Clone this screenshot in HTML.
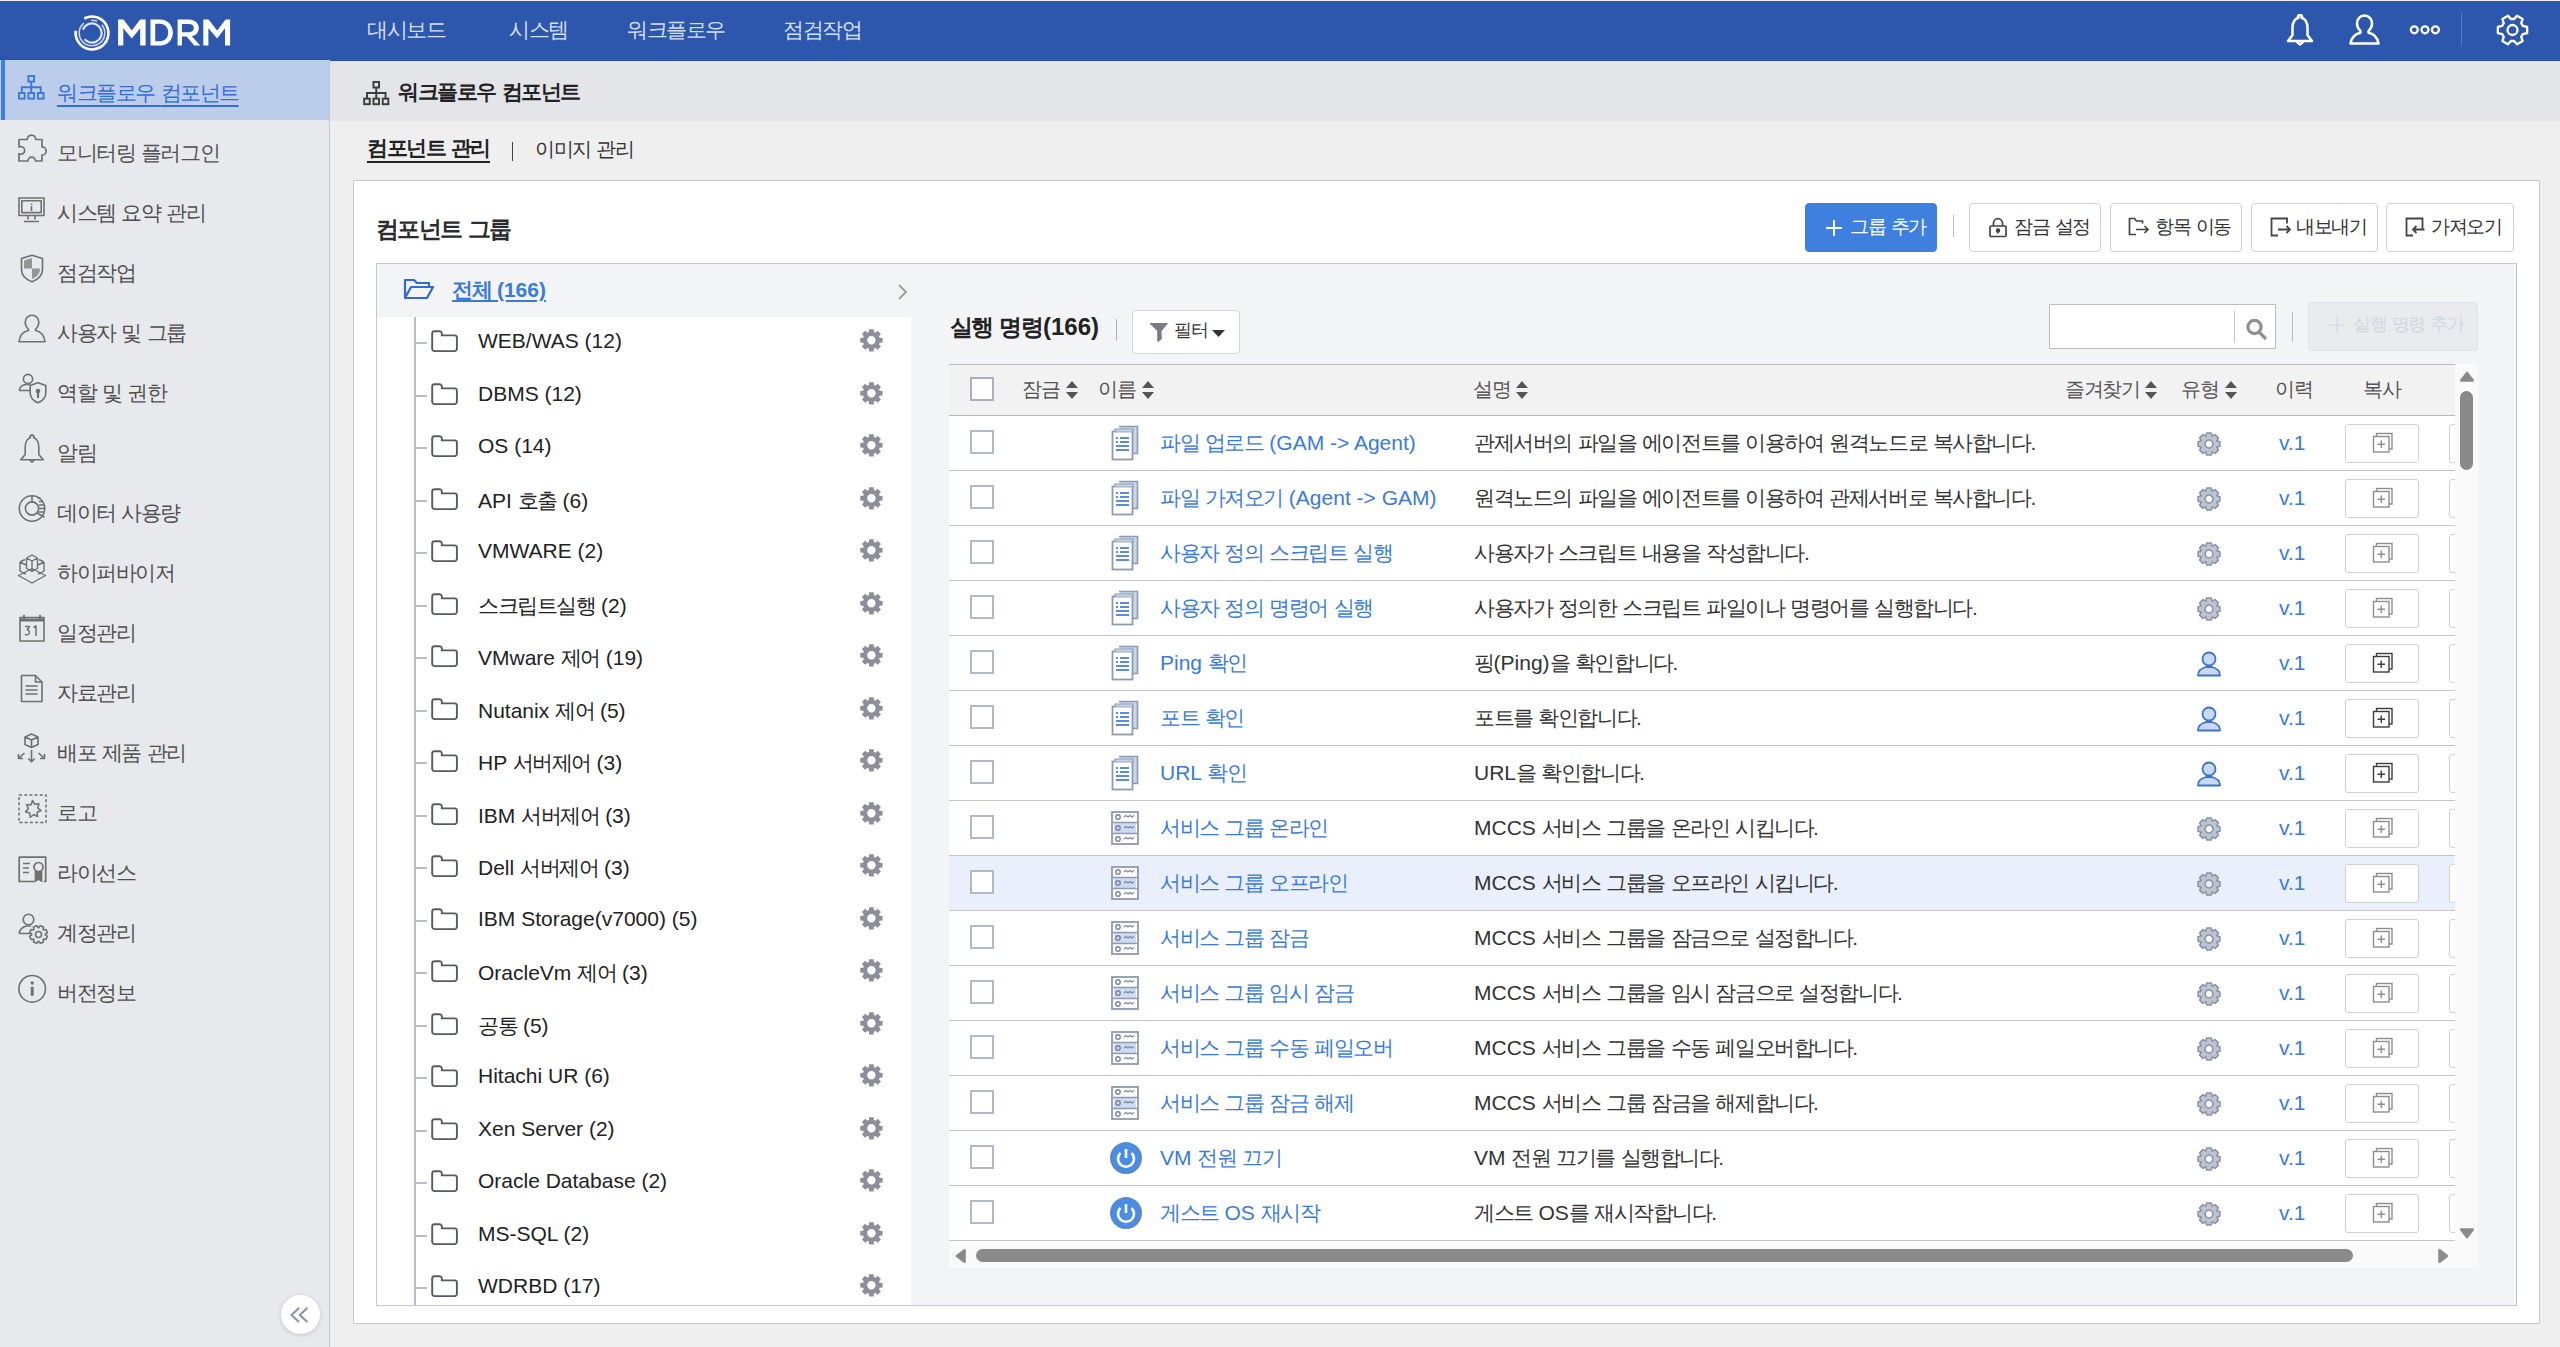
<!DOCTYPE html><html lang="ko"><head><meta charset="utf-8"><style>
*{box-sizing:border-box;margin:0;padding:0}
html,body{width:2560px;height:1347px;overflow:hidden}
body{font-family:"Liberation Sans",sans-serif;background:#efefef;position:relative;color:#333}
.a{position:absolute;white-space:nowrap}
svg{position:absolute;overflow:visible}
#hdr{left:0;top:0;width:2560px;height:61px;background:#2d57ad;border-top:1px solid #e9eef8;border-bottom:1px solid #2750a6}
.nav{top:16px;font-size:21px;color:#d5def3}
#side{left:0;top:59px;width:330px;height:1288px;background:#e8e9ed;border-right:1px solid #c3c6cc;border-top:1px solid #484c55}
.sit{position:absolute;left:0;width:329px;height:60px}
.sit .tx{position:absolute;left:57px;top:19px;font-size:21px;color:#505050;white-space:nowrap}
.act{background:#bccdeb}
.act .bar{position:absolute;left:1px;top:0;width:4px;height:60px;background:#3f80e0}
#titlebar{left:330px;top:61px;width:2230px;height:60px;background:#e4e5e8}
#card{left:353px;top:180px;width:2187px;height:1144px;background:#fff;border:1px solid #c9cacd}
#panel{left:376px;top:263px;width:2141px;height:1043px;background:#f3f4f6;border:1px solid #c6c8cc}
.btn{position:absolute;top:203px;height:49px;border:1px solid #cfd1d5;border-radius:4px;background:#fff}
.btn .tx{position:absolute;top:10px;font-size:18.5px;color:#333;white-space:nowrap}
.tree{left:377px;top:317px;width:534px;height:989px;background:#fff;border-bottom:1px solid #c6c8cc}
.ti{position:absolute;left:0;width:534px;height:52px}
.ti .tx{position:absolute;left:101px;top:14px;font-size:21px;color:#222;white-space:nowrap}
.th{position:absolute;top:376px;font-size:20px;color:#555;white-space:nowrap}
.row{position:absolute;left:949px;width:1506px;height:55px;border-bottom:1px solid #c4c4c4;background:#fff}
.cb{position:absolute;left:21px;top:14px;width:24px;height:24px;border:2px solid #b1b8c6;background:#fff}
.nm{position:absolute;left:211px;top:13px;font-size:21px;color:#3a7bd9;white-space:nowrap}
.ds{position:absolute;left:525px;top:13px;font-size:21px;color:#333;white-space:nowrap}
.vr{position:absolute;left:1330px;top:15px;font-size:21px;color:#3a7bd9;white-space:nowrap}
.cp{position:absolute;left:1396px;top:8px;width:74px;height:39px;border:1px solid #d0d0d0;border-radius:3px;background:#fff}
.cp2{position:absolute;left:1500px;top:8px;width:20px;height:39px;border:1px solid #d0d0d0;border-radius:3px;background:#fff}
.k{letter-spacing:-0.07em}</style></head><body><div id="hdr" class="a"></div><svg width="40" height="40" viewBox="0 0 40 40" style="left:71.7px;top:12.5px" fill="none" stroke="#fff"><circle cx="20" cy="20" r="16.4" stroke-width="2.6" stroke-dasharray="87 16" transform="rotate(242 20 20)"/><circle cx="20" cy="20" r="12.8" stroke-width="1.6" opacity=".75" stroke-dasharray="60 8 6 6" transform="rotate(-40 20 20)"/><circle cx="20" cy="20" r="9.6" stroke-width="2.2" opacity=".85" stroke-dasharray="50 10" transform="rotate(200 20 20)"/></svg><svg width="260" height="61" viewBox="0 0 260 61" style="left:0;top:0"><path fill="#fff" fill-rule="evenodd" d="M118.1 45.6V19.4H123.5L131.8 30.4L140.1 19.4H145.6V45.6H140.2V28.3L131.8 38.5L123.3 28.3V45.6Z M150.5 19.4H160.5C167.5 19.4 172.9 25 172.9 32.5C172.9 40 167.5 45.6 160.5 45.6H150.5Z M155.2 23.8V41.2H160.3C164.8 41.2 168.2 37.5 168.2 32.5C168.2 27.5 164.8 23.8 160.3 23.8Z M177.6 45.6V19.4H189C194.8 19.4 198.8 23 198.8 28C198.8 32.3 196 35.4 191.8 36.2L200.2 45.6H194.2L186.6 36.6H181.9V45.6Z M181.9 23.9V32.2H188.8C191.8 32.2 193.8 30.6 193.8 28C193.8 25.4 191.8 23.9 188.8 23.9Z M203.3 45.6V19.4H208.6L217.1 30.4L225.6 19.4H230.1V45.6H225V28.3L217.1 38.5L208.4 28.3V45.6Z"/></svg><div class="a nav" style="left:367px"><span class="k">대시보드</span></div><div class="a nav" style="left:509px"><span class="k">시스템</span></div><div class="a nav" style="left:627px"><span class="k">워크플로우</span></div><div class="a nav" style="left:783px"><span class="k">점검작업</span></div><svg width="30" height="34" viewBox="0 0 30 34" style="left:2285px;top:13px" fill="none" stroke="#fff" stroke-width="2.5" stroke-linejoin="round"><path d="M15 2.5a1.2 1.2 0 0 1 1.5 2.2C21 6 22.5 10 22.5 15v7l4.5 6H3l4.5-6v-7c0-5 1.5-9 6-10.300A1.2 1.200 0 0 1 15 2.500z"/><path d="M11.5 28.5l3.500 3 3.500-3"/></svg><svg width="32" height="32" viewBox="0 0 32 32" style="left:2349px;top:14px" fill="none" stroke="#fff" stroke-width="2.5" stroke-linejoin="round"><path d="M15.500 1.500c-4.500 0-7.500 3.500-7.500 8 0 3 1.200 5.500 3.500 7.500v1.800C6 20 2.500 23 1.500 29.500h28C28.500 23 25 20 19.500 18.800V17c2.300-2 3.500-4.500 3.500-7.500 0-4.500-3-8-7.500-8z"/></svg><svg width="32" height="12" viewBox="0 0 32 12" style="left:2409px;top:24px" fill="none" stroke="#fff" stroke-width="2.2"><circle cx="5.300" cy="5.800" r="3.500"/><circle cx="16" cy="5.800" r="3.500"/><circle cx="26.400" cy="5.800" r="3.500"/></svg><div class="a" style="left:2461px;top:13px;width:1px;height:33px;background:#4f7bd3"></div><svg width="40" height="40" viewBox="0 0 40 40" style="left:2492px;top:10px" fill="none" stroke="#fff" stroke-width="2.3" stroke-linejoin="round"><path d="M30.67 15.80L35.15 16.80 L35.15 23.20 L30.67 24.20A11.00 11.00 0 0 1 29.22 26.70L30.60 31.09 L25.06 34.29 L21.95 30.90A11.00 11.00 0 0 1 19.05 30.90L15.94 34.29 L10.40 31.09 L11.78 26.70A11.00 11.00 0 0 1 10.33 24.20L5.85 23.20 L5.85 16.80 L10.33 15.80A11.00 11.00 0 0 1 11.78 13.30L10.40 8.91 L15.94 5.71 L19.05 9.10A11.00 11.00 0 0 1 21.95 9.10L25.06 5.71 L30.60 8.91 L29.22 13.30A11.00 11.00 0 0 1 30.67 15.80 Z"/><circle cx="20.5" cy="20" r="5"/></svg><div id="side" class="a"><div class="sit act" style="top:0px"><div class="bar"></div><svg width="26.5" height="26.5" viewBox="0 0 28 28" style="left:17.8px;top:14.8px" fill="none" stroke="#3b78d8" stroke-width="2"><rect x="11" y="1" width="6" height="6"/><rect x="1" y="19" width="6" height="6"/><rect x="11" y="19" width="6" height="6"/><rect x="21" y="19" width="6" height="6"/><path d="M14 7v12M4 19v-6h20v6"/></svg><div class="tx" style="color:#2f6fd6;text-decoration:underline;text-decoration-thickness:1.5px;text-underline-offset:5px"><span class="k">워크플로우</span> <span class="k">컴포넌트</span></div></div><div class="sit" style="top:60px"><svg width="30" height="30" viewBox="0 0 30 30" style="left:18px;top:13px" fill="none" stroke="#707070" stroke-width="1.7" stroke-linejoin="round"><path d="M1 6.5h8.2a4.3 4.300 0 1 1 8.600 0H24v7.300a4 4 0 1 1 0 8.400V28h-6.500a3.800 3.800 0 1 0-7.600 0H1v-7.300a3.800 3.800 0 1 0 0-6.600z"/></svg><div class="tx"><span class="k">모니터링</span> <span class="k">플러그인</span></div></div><div class="sit" style="top:120px"><svg width="27" height="26" viewBox="0 0 27 26" style="left:18px;top:17px" fill="none" stroke="#707070" stroke-width="1.6" stroke-linejoin="round"><rect x="1" y="1" width="25" height="17.500"/><rect x="3.800" y="3.800" width="19.400" height="11.800"/><path d="M13.500 6.500v1.300M13.500 9v5M10 18.500v4M17 18.500v4M6 24.500h15"/></svg><div class="tx"><span class="k">시스템</span> <span class="k">요약</span> <span class="k">관리</span></div></div><div class="sit" style="top:180px"><svg width="24" height="29" viewBox="0 0 24 29" style="left:20px;top:14px" fill="none" stroke="#707070" stroke-width="1.6" stroke-linejoin="round"><path d="M12 1.200l10.500 3.300v11c0 6-4.500 10-10.500 12.300C6 25.500 1.500 21.500 1.500 15.500v-11z"/><path d="M4 6.500L12 4v10.500H4zM12 14.500h8c0 5-3 8.500-8 10.500z" fill="#959595" stroke="none"/></svg><div class="tx"><span class="k">점검작업</span></div></div><div class="sit" style="top:240px"><svg width="28" height="30" viewBox="0 0 28 30" style="left:18px;top:14px" fill="none" stroke="#707070" stroke-width="1.6" stroke-linejoin="round"><path d="M14 1.200c-4 0-6.800 3-6.800 7 0 2.800 1.100 5 3.200 6.800v1.500C5.500 17.600 1.800 20 1 27.800h26C26.200 20 22.500 17.600 17.600 16.500V15c2.100-1.800 3.200-4 3.200-6.800 0-4-2.800-7-6.800-7z"/></svg><div class="tx"><span class="k">사용자</span> <span class="k">및</span> <span class="k">그룹</span></div></div><div class="sit" style="top:300px"><svg width="29" height="32" viewBox="0 0 29 32" style="left:18px;top:13px" fill="none" stroke="#707070" stroke-width="1.6" stroke-linejoin="round"><circle cx="10" cy="6" r="4.600"/><path d="M1.200 17.500c.500-3.500 3.500-5.500 6.500-6h4.500M1.200 17.500h11"/><path d="M20 9.800l7.800 2.700v7.300c0 4.800-3.300 8.300-7.800 10-4.500-1.700-7.800-5.200-7.800-10v-7.300z"/><circle cx="20" cy="18" r="2.300" fill="#707070" stroke="none"/><path d="M20 19v6" stroke-width="2.200"/></svg><div class="tx"><span class="k">역할</span> <span class="k">및</span> <span class="k">권한</span></div></div><div class="sit" style="top:360px"><svg width="26" height="30" viewBox="0 0 26 30" style="left:19px;top:14px" fill="none" stroke="#707070" stroke-width="1.6" stroke-linejoin="round"><path d="M13 1.500a1.200 1.200 0 0 1 1.500 2C18.500 5 19.800 8.500 19.800 13v7.500l4.500 5.200H1.700l4.500-5.200V13c0-4.500 1.300-8 5.300-9.500A1.200 1.200 0 0 1 13 1.500z"/><path d="M10.500 25.800l2.500 2.500 2.500-2.500"/></svg><div class="tx"><span class="k">알림</span></div></div><div class="sit" style="top:420px"><svg width="29" height="30" viewBox="0 0 29 30" style="left:18px;top:14px" fill="none" stroke="#707070" stroke-width="1.6" stroke-linejoin="round"><circle cx="14" cy="14.500" r="12.700"/><circle cx="14" cy="14.500" r="6.600"/><path d="M14 1.800v6.100M19 19l7.500 4.200" /><path d="M19.500 4h3M20.800 7.500h4M20.800 11h5.500M20.800 14.500h5.800M20.500 18h5.500M24 21.500" stroke-width="1.300"/></svg><div class="tx"><span class="k">데이터</span> <span class="k">사용량</span></div></div><div class="sit" style="top:480px"><svg width="30" height="33" viewBox="0 0 30 33" style="left:17px;top:12px" fill="none" stroke="#707070" stroke-width="1.4" stroke-linejoin="round"><path d="M1.500 23.500L15 16.500l13.500 7L15 31z"/><path d="M9.500 6l5.500-3 5.500 3v10.500l-5.500 3-5.500-3zM9.500 6l5.500 3 5.500-3M15 9v10.500"/><path d="M3 10l5-2.500M3 10v9l6 3.200M27 10l-5-2.500M27 10v9l-6 3.200M3 10l6 3M27 10l-6 3"/></svg><div class="tx"><span class="k">하이퍼바이저</span></div></div><div class="sit" style="top:540px"><svg width="27" height="28" viewBox="0 0 27 28" style="left:19px;top:14px" fill="none" stroke="#707070" stroke-width="1.6" stroke-linejoin="round"><rect x="1" y="3.500" width="24" height="23.500"/><path d="M1 6h24" stroke-width="3"/><path d="M5 1v4M21 1v4" stroke-width="2"/><path d="M6 12.500h4.500l-2.300 3.200a2.600 2.600 0 1 1-2.300 4.300M14.500 13.500l2.500-1.500v10" stroke-width="1.500"/></svg><div class="tx"><span class="k">일정관리</span></div></div><div class="sit" style="top:600px"><svg width="25" height="30" viewBox="0 0 25 30" style="left:20px;top:14px" fill="none" stroke="#707070" stroke-width="1.6" stroke-linejoin="round"><path d="M1.500 1.500h14l6.500 6.500v19.500H1.500z"/><path d="M15.500 1.500V8H22M5.500 12h12M5.500 16h12M5.500 20h12"/></svg><div class="tx"><span class="k">자료관리</span></div></div><div class="sit" style="top:660px"><svg width="29" height="32" viewBox="0 0 29 32" style="left:17px;top:13px" fill="none" stroke="#707070" stroke-width="1.6" stroke-linejoin="round"><path d="M14.500 1l6.500 3v7.500l-6.500 3-6.500-3V4zM8 4l6.500 3 6.500-3M14.500 7v7.500"/><path d="M14.500 17v11.500M11.300 25.500l3.200 3.200 3.200-3.200M7.500 20l-6 5.500M1.500 21v4.500H6M21.500 20l6 5.500M27.500 21v4.500H23"/></svg><div class="tx"><span class="k">배포</span> <span class="k">제품</span> <span class="k">관리</span></div></div><div class="sit" style="top:720px"><svg width="29" height="30" viewBox="0 0 29 30" style="left:18px;top:14px" fill="none" stroke="#707070" stroke-width="1.5" stroke-linejoin="round"><rect x="1" y="1" width="27" height="27.500" stroke-dasharray="3 2.200"/><path d="M14.500 6.500l2.200 3.800 4.300-.500-1.300 4.100 3.300 2.600-3.900 1.700.500 4.300-3.900-2-3.300 2.800-.700-4.300-4.200-1.300 2.900-3.200-1.800-3.900 4.300.300z"/></svg><div class="tx"><span class="k">로고</span></div></div><div class="sit" style="top:780px"><svg width="29" height="28" viewBox="0 0 29 28" style="left:18px;top:16px" fill="none" stroke="#707070" stroke-width="1.7" stroke-linejoin="round"><path d="M17 25.500H1.200V1.200h26.500v24.300h-2"/><path d="M5 7.500h7M5 12h6M5 16.500h6"/><circle cx="20.500" cy="11" r="4.500"/><path d="M17.500 15v10l3-2 3 2V15" fill="#707070"/></svg><div class="tx"><span class="k">라이선스</span></div></div><div class="sit" style="top:840px"><svg width="30" height="32" viewBox="0 0 30 32" style="left:18px;top:13px" fill="none" stroke="#707070" stroke-width="1.6" stroke-linejoin="round"><circle cx="10.500" cy="6.500" r="5.300"/><path d="M1.200 20.500c.300-4 3.800-6.500 7-7.500h5M1.200 20.500H14" /><circle cx="20.500" cy="21.500" r="3"/><path d="M20.82 14.71L22.21 12.66 L25.54 14.04 L25.07 16.47A6.80 6.80 0 0 1 25.53 16.93L27.96 16.46 L29.34 19.79 L27.29 21.18A6.80 6.80 0 0 1 27.29 21.82L29.34 23.21 L27.96 26.54 L25.53 26.07A6.80 6.80 0 0 1 25.07 26.53L25.54 28.96 L22.21 30.34 L20.82 28.29A6.80 6.80 0 0 1 20.18 28.29L18.79 30.34 L15.46 28.96 L15.93 26.53A6.80 6.80 0 0 1 15.47 26.07L13.04 26.54 L11.66 23.21 L13.71 21.82A6.80 6.80 0 0 1 13.71 21.18L11.66 19.79 L13.04 16.46 L15.47 16.93A6.80 6.80 0 0 1 15.93 16.47L15.46 14.04 L18.79 12.66 L20.18 14.71A6.80 6.80 0 0 1 20.82 14.71 Z"/></svg><div class="tx"><span class="k">계정관리</span></div></div><div class="sit" style="top:900px"><svg width="29" height="30" viewBox="0 0 29 30" style="left:18px;top:14px" fill="none" stroke="#707070" stroke-width="1.6" stroke-linejoin="round"><circle cx="14.200" cy="14.800" r="13.300"/><circle cx="14.200" cy="9" r="1.700" fill="#707070" stroke="none"/><path d="M14.200 12.800v9" stroke-width="3"/></svg><div class="tx"><span class="k">버전정보</span></div></div><div class="a" style="left:281px;top:1235px;width:39px;height:39px;border-radius:50%;background:#fff;box-shadow:0 1px 4px rgba(60,70,90,.22)"><svg width="20" height="20" viewBox="0 0 20 20" style="left:8px;top:11px" fill="none" stroke="#8d95a3" stroke-width="2.2" stroke-linecap="round" stroke-linejoin="round"><path d="M9.5 2.5L2.5 9l7 6.5M17.8 2.5L10.8 9l7 6.5"/></svg></div></div><div id="titlebar" class="a"></div><svg width="26.5" height="26" viewBox="0 0 28 28" style="left:362.5px;top:80.5px" fill="none" stroke="#3d3d3d" stroke-width="2.1"><rect x="11" y="1" width="6" height="6"/><rect x="1" y="19" width="6" height="6"/><rect x="11" y="19" width="6" height="6"/><rect x="21" y="19" width="6" height="6"/><path d="M14 7v12M4 19v-6h20v6"/></svg><div class="a" style="left:398px;top:78px;font-size:21px;font-weight:bold;color:#222"><span class="k">워크플로우</span> <span class="k">컴포넌트</span></div><div class="a" style="left:367px;top:136px;font-size:21px;font-weight:bold;color:#222;border-bottom:2px solid #222;padding-bottom:1px;line-height:24px"><span class="k">컴포넌트</span> <span class="k">관리</span></div><div class="a" style="left:511.5px;top:142px;width:1.5px;height:19px;background:#444"></div><div class="a" style="left:535px;top:136px;font-size:20px;color:#333"><span class="k">이미지</span> <span class="k">관리</span></div><div id="card" class="a"></div><div class="a" style="left:376px;top:214px;font-size:23px;font-weight:bold;color:#2c2c2c"><span class="k">컴포넌트</span> <span class="k">그룹</span></div><div class="btn" style="left:1805px;width:132px;background:#3f7fde;border-color:#3f7fde"><svg width="18" height="18" viewBox="0 0 18 18" style="left:19px;top:15px" stroke="#fff" stroke-width="2"><path d="M9 1v16M1 9h16"/></svg><div class="tx" style="left:44px;color:#fff"><span class="k">그룹</span> <span class="k">추가</span></div></div><div class="a" style="left:1953px;top:215px;width:1px;height:22px;background:#b8bcc6"></div><div class="btn" style="left:1969px;width:132px"><svg width="20" height="22" viewBox="0 0 20 22" style="left:18px;top:13px" fill="none" stroke="#444" stroke-width="1.7"><path d="M5.5 9V6.2a4.500 4.500 0 0 1 9 0V9"/><rect x="2" y="9" width="16" height="10.500" rx="1"/><circle cx="10" cy="13.500" r="1.400" fill="#444"/><path d="M10 13.500v3"/></svg><div class="tx" style="left:44px"><span class="k">잠금</span> <span class="k">설정</span></div></div><div class="btn" style="left:2110px;width:132px"><svg width="22" height="20" viewBox="0 0 22 20" style="left:17px;top:13px" fill="none" stroke="#444" stroke-width="1.7"><path d="M8 17.500H1.500V1.500h5l2 2.500h6v2.500"/><path d="M8 12.500h12M16.500 9l3.500 3.500-3.500 3.500"/></svg><div class="tx" style="left:44px"><span class="k">항목</span> <span class="k">이동</span></div></div><div class="btn" style="left:2251px;width:127px"><svg width="22" height="20" viewBox="0 0 22 20" style="left:18px;top:13px" fill="none" stroke="#444" stroke-width="1.8"><path d="M8 18.500H1.500V1.500h15.500v5"/><path d="M8 12.500h12M16.500 9l3.500 3.500-3.500 3.500"/></svg><div class="tx" style="left:44px"><span class="k">내보내기</span></div></div><div class="btn" style="left:2386px;width:128px"><svg width="22" height="20" viewBox="0 0 22 20" style="left:18px;top:13px" fill="none" stroke="#444" stroke-width="1.8"><path d="M8 18.500H1.500V1.500h16v10.500"/><path d="M19.500 12.500H8M11.500 9L8 12.500l3.500 3.500"/></svg><div class="tx" style="left:44px"><span class="k">가져오기</span></div></div><div id="panel" class="a"></div><svg width="32" height="24" viewBox="0 0 32 24" style="left:403px;top:277px" fill="none" stroke="#2f6bd6" stroke-width="2.2" stroke-linejoin="round"><path d="M2 21V3h9l3 3h12v4M2 21l6-11h22l-6 11z"/></svg><div class="a" style="left:452px;top:276px;font-size:21px;font-weight:bold;color:#3a7bd9;text-decoration:underline;text-underline-offset:3px"><span class="k">전체</span> (166)</div><svg width="10" height="16" viewBox="0 0 10 16" style="left:897px;top:284px" fill="none" stroke="#999" stroke-width="1.8"><path d="M2 1l7 7-7 7"/></svg><div class="a tree"><div class="a" style="left:37px;top:0;width:2px;height:988px;background:#b9bdc5"></div><div class="ti" style="top:-2.0px"><div class="a" style="left:38px;top:27px;width:12px;height:2px;background:#b9bdc5"></div><svg width="28" height="24" viewBox="0 0 28 24" style="left:54px;top:15px" fill="none" stroke="#565b5f" stroke-width="1.9"><path d="M3.5 1.2H8.5a2.3 2.3 0 0 1 2.3 2.3V5.4H23.6a2.3 2.3 0 0 1 2.3 2.3V18.8a2.3 2.3 0 0 1-2.3 2.3H3.5a2.3 2.3 0 0 1-2.3-2.3V3.5a2.3 2.3 0 0 1 2.3-2.3Z"/></svg><div class="tx">WEB/WAS (12)</div><svg width="24" height="24" viewBox="0 0 24 24" style="left:482px;top:13px"><path fill="#8e8e9a" fill-rule="evenodd" d="M9.90 4.07L10.10 1.13 L14.70 1.13 L14.90 4.07A8.60 8.60 0 0 1 16.45 4.71L18.67 2.78 L21.92 6.03 L19.99 8.25A8.60 8.60 0 0 1 20.63 9.80L23.57 10.00 L23.57 14.60 L20.63 14.80A8.60 8.60 0 0 1 19.99 16.35L21.92 18.57 L18.67 21.82 L16.45 19.89A8.60 8.60 0 0 1 14.90 20.53L14.70 23.47 L10.10 23.47 L9.90 20.53A8.60 8.60 0 0 1 8.35 19.89L6.13 21.82 L2.88 18.57 L4.81 16.35A8.60 8.60 0 0 1 4.17 14.80L1.23 14.60 L1.23 10.00 L4.17 9.80A8.60 8.60 0 0 1 4.81 8.25L2.88 6.03 L6.13 2.78 L8.35 4.71A8.60 8.60 0 0 1 9.90 4.07 ZM16.60 12.30 A4.20 4.20 0 1 0 8.20 12.30 A4.20 4.20 0 1 0 16.60 12.30 Z"/></svg></div><div class="ti" style="top:50.5px"><div class="a" style="left:38px;top:27px;width:12px;height:2px;background:#b9bdc5"></div><svg width="28" height="24" viewBox="0 0 28 24" style="left:54px;top:15px" fill="none" stroke="#565b5f" stroke-width="1.9"><path d="M3.5 1.2H8.5a2.3 2.3 0 0 1 2.3 2.3V5.4H23.6a2.3 2.3 0 0 1 2.3 2.3V18.8a2.3 2.3 0 0 1-2.3 2.3H3.5a2.3 2.3 0 0 1-2.3-2.3V3.5a2.3 2.3 0 0 1 2.3-2.3Z"/></svg><div class="tx">DBMS (12)</div><svg width="24" height="24" viewBox="0 0 24 24" style="left:482px;top:13px"><path fill="#8e8e9a" fill-rule="evenodd" d="M9.90 4.07L10.10 1.13 L14.70 1.13 L14.90 4.07A8.60 8.60 0 0 1 16.45 4.71L18.67 2.78 L21.92 6.03 L19.99 8.25A8.60 8.60 0 0 1 20.63 9.80L23.57 10.00 L23.57 14.60 L20.63 14.80A8.60 8.60 0 0 1 19.99 16.35L21.92 18.57 L18.67 21.82 L16.45 19.89A8.60 8.60 0 0 1 14.90 20.53L14.70 23.47 L10.10 23.47 L9.90 20.53A8.60 8.60 0 0 1 8.35 19.89L6.13 21.82 L2.88 18.57 L4.81 16.35A8.60 8.60 0 0 1 4.17 14.80L1.23 14.60 L1.23 10.00 L4.17 9.80A8.60 8.60 0 0 1 4.81 8.25L2.88 6.03 L6.13 2.78 L8.35 4.71A8.60 8.60 0 0 1 9.90 4.07 ZM16.60 12.30 A4.20 4.20 0 1 0 8.20 12.30 A4.20 4.20 0 1 0 16.60 12.30 Z"/></svg></div><div class="ti" style="top:103.0px"><div class="a" style="left:38px;top:27px;width:12px;height:2px;background:#b9bdc5"></div><svg width="28" height="24" viewBox="0 0 28 24" style="left:54px;top:15px" fill="none" stroke="#565b5f" stroke-width="1.9"><path d="M3.5 1.2H8.5a2.3 2.3 0 0 1 2.3 2.3V5.4H23.6a2.3 2.3 0 0 1 2.3 2.3V18.8a2.3 2.3 0 0 1-2.3 2.3H3.5a2.3 2.3 0 0 1-2.3-2.3V3.5a2.3 2.3 0 0 1 2.3-2.3Z"/></svg><div class="tx">OS (14)</div><svg width="24" height="24" viewBox="0 0 24 24" style="left:482px;top:13px"><path fill="#8e8e9a" fill-rule="evenodd" d="M9.90 4.07L10.10 1.13 L14.70 1.13 L14.90 4.07A8.60 8.60 0 0 1 16.45 4.71L18.67 2.78 L21.92 6.03 L19.99 8.25A8.60 8.60 0 0 1 20.63 9.80L23.57 10.00 L23.57 14.60 L20.63 14.80A8.60 8.60 0 0 1 19.99 16.35L21.92 18.57 L18.67 21.82 L16.45 19.89A8.60 8.60 0 0 1 14.90 20.53L14.70 23.47 L10.10 23.47 L9.90 20.53A8.60 8.60 0 0 1 8.35 19.89L6.13 21.82 L2.88 18.57 L4.81 16.35A8.60 8.60 0 0 1 4.17 14.80L1.23 14.60 L1.23 10.00 L4.17 9.80A8.60 8.60 0 0 1 4.81 8.25L2.88 6.03 L6.13 2.78 L8.35 4.71A8.60 8.60 0 0 1 9.90 4.07 ZM16.60 12.30 A4.20 4.20 0 1 0 8.20 12.30 A4.20 4.20 0 1 0 16.60 12.30 Z"/></svg></div><div class="ti" style="top:155.5px"><div class="a" style="left:38px;top:27px;width:12px;height:2px;background:#b9bdc5"></div><svg width="28" height="24" viewBox="0 0 28 24" style="left:54px;top:15px" fill="none" stroke="#565b5f" stroke-width="1.9"><path d="M3.5 1.2H8.5a2.3 2.3 0 0 1 2.3 2.3V5.4H23.6a2.3 2.3 0 0 1 2.3 2.3V18.8a2.3 2.3 0 0 1-2.3 2.3H3.5a2.3 2.3 0 0 1-2.3-2.3V3.5a2.3 2.3 0 0 1 2.3-2.3Z"/></svg><div class="tx">API <span class="k">호출</span> (6)</div><svg width="24" height="24" viewBox="0 0 24 24" style="left:482px;top:13px"><path fill="#8e8e9a" fill-rule="evenodd" d="M9.90 4.07L10.10 1.13 L14.70 1.13 L14.90 4.07A8.60 8.60 0 0 1 16.45 4.71L18.67 2.78 L21.92 6.03 L19.99 8.25A8.60 8.60 0 0 1 20.63 9.80L23.57 10.00 L23.57 14.60 L20.63 14.80A8.60 8.60 0 0 1 19.99 16.35L21.92 18.57 L18.67 21.82 L16.45 19.89A8.60 8.60 0 0 1 14.90 20.53L14.70 23.47 L10.10 23.47 L9.90 20.53A8.60 8.60 0 0 1 8.35 19.89L6.13 21.82 L2.88 18.57 L4.81 16.35A8.60 8.60 0 0 1 4.17 14.80L1.23 14.60 L1.23 10.00 L4.17 9.80A8.60 8.60 0 0 1 4.81 8.25L2.88 6.03 L6.13 2.78 L8.35 4.71A8.60 8.60 0 0 1 9.90 4.07 ZM16.60 12.30 A4.20 4.20 0 1 0 8.20 12.30 A4.20 4.20 0 1 0 16.60 12.30 Z"/></svg></div><div class="ti" style="top:208.0px"><div class="a" style="left:38px;top:27px;width:12px;height:2px;background:#b9bdc5"></div><svg width="28" height="24" viewBox="0 0 28 24" style="left:54px;top:15px" fill="none" stroke="#565b5f" stroke-width="1.9"><path d="M3.5 1.2H8.5a2.3 2.3 0 0 1 2.3 2.3V5.4H23.6a2.3 2.3 0 0 1 2.3 2.3V18.8a2.3 2.3 0 0 1-2.3 2.3H3.5a2.3 2.3 0 0 1-2.3-2.3V3.5a2.3 2.3 0 0 1 2.3-2.3Z"/></svg><div class="tx">VMWARE (2)</div><svg width="24" height="24" viewBox="0 0 24 24" style="left:482px;top:13px"><path fill="#8e8e9a" fill-rule="evenodd" d="M9.90 4.07L10.10 1.13 L14.70 1.13 L14.90 4.07A8.60 8.60 0 0 1 16.45 4.71L18.67 2.78 L21.92 6.03 L19.99 8.25A8.60 8.60 0 0 1 20.63 9.80L23.57 10.00 L23.57 14.60 L20.63 14.80A8.60 8.60 0 0 1 19.99 16.35L21.92 18.57 L18.67 21.82 L16.45 19.89A8.60 8.60 0 0 1 14.90 20.53L14.70 23.47 L10.10 23.47 L9.90 20.53A8.60 8.60 0 0 1 8.35 19.89L6.13 21.82 L2.88 18.57 L4.81 16.35A8.60 8.60 0 0 1 4.17 14.80L1.23 14.60 L1.23 10.00 L4.17 9.80A8.60 8.60 0 0 1 4.81 8.25L2.88 6.03 L6.13 2.78 L8.35 4.71A8.60 8.60 0 0 1 9.90 4.07 ZM16.60 12.30 A4.20 4.20 0 1 0 8.20 12.30 A4.20 4.20 0 1 0 16.60 12.30 Z"/></svg></div><div class="ti" style="top:260.5px"><div class="a" style="left:38px;top:27px;width:12px;height:2px;background:#b9bdc5"></div><svg width="28" height="24" viewBox="0 0 28 24" style="left:54px;top:15px" fill="none" stroke="#565b5f" stroke-width="1.9"><path d="M3.5 1.2H8.5a2.3 2.3 0 0 1 2.3 2.3V5.4H23.6a2.3 2.3 0 0 1 2.3 2.3V18.8a2.3 2.3 0 0 1-2.3 2.3H3.5a2.3 2.3 0 0 1-2.3-2.3V3.5a2.3 2.3 0 0 1 2.3-2.3Z"/></svg><div class="tx"><span class="k">스크립트실행</span> (2)</div><svg width="24" height="24" viewBox="0 0 24 24" style="left:482px;top:13px"><path fill="#8e8e9a" fill-rule="evenodd" d="M9.90 4.07L10.10 1.13 L14.70 1.13 L14.90 4.07A8.60 8.60 0 0 1 16.45 4.71L18.67 2.78 L21.92 6.03 L19.99 8.25A8.60 8.60 0 0 1 20.63 9.80L23.57 10.00 L23.57 14.60 L20.63 14.80A8.60 8.60 0 0 1 19.99 16.35L21.92 18.57 L18.67 21.82 L16.45 19.89A8.60 8.60 0 0 1 14.90 20.53L14.70 23.47 L10.10 23.47 L9.90 20.53A8.60 8.60 0 0 1 8.35 19.89L6.13 21.82 L2.88 18.57 L4.81 16.35A8.60 8.60 0 0 1 4.17 14.80L1.23 14.60 L1.23 10.00 L4.17 9.80A8.60 8.60 0 0 1 4.81 8.25L2.88 6.03 L6.13 2.78 L8.35 4.71A8.60 8.60 0 0 1 9.90 4.07 ZM16.60 12.30 A4.20 4.20 0 1 0 8.20 12.30 A4.20 4.20 0 1 0 16.60 12.30 Z"/></svg></div><div class="ti" style="top:313.0px"><div class="a" style="left:38px;top:27px;width:12px;height:2px;background:#b9bdc5"></div><svg width="28" height="24" viewBox="0 0 28 24" style="left:54px;top:15px" fill="none" stroke="#565b5f" stroke-width="1.9"><path d="M3.5 1.2H8.5a2.3 2.3 0 0 1 2.3 2.3V5.4H23.6a2.3 2.3 0 0 1 2.3 2.3V18.8a2.3 2.3 0 0 1-2.3 2.3H3.5a2.3 2.3 0 0 1-2.3-2.3V3.5a2.3 2.3 0 0 1 2.3-2.3Z"/></svg><div class="tx">VMware <span class="k">제어</span> (19)</div><svg width="24" height="24" viewBox="0 0 24 24" style="left:482px;top:13px"><path fill="#8e8e9a" fill-rule="evenodd" d="M9.90 4.07L10.10 1.13 L14.70 1.13 L14.90 4.07A8.60 8.60 0 0 1 16.45 4.71L18.67 2.78 L21.92 6.03 L19.99 8.25A8.60 8.60 0 0 1 20.63 9.80L23.57 10.00 L23.57 14.60 L20.63 14.80A8.60 8.60 0 0 1 19.99 16.35L21.92 18.57 L18.67 21.82 L16.45 19.89A8.60 8.60 0 0 1 14.90 20.53L14.70 23.47 L10.10 23.47 L9.90 20.53A8.60 8.60 0 0 1 8.35 19.89L6.13 21.82 L2.88 18.57 L4.81 16.35A8.60 8.60 0 0 1 4.17 14.80L1.23 14.60 L1.23 10.00 L4.17 9.80A8.60 8.60 0 0 1 4.81 8.25L2.88 6.03 L6.13 2.78 L8.35 4.71A8.60 8.60 0 0 1 9.90 4.07 ZM16.60 12.30 A4.20 4.20 0 1 0 8.20 12.30 A4.20 4.20 0 1 0 16.60 12.30 Z"/></svg></div><div class="ti" style="top:365.5px"><div class="a" style="left:38px;top:27px;width:12px;height:2px;background:#b9bdc5"></div><svg width="28" height="24" viewBox="0 0 28 24" style="left:54px;top:15px" fill="none" stroke="#565b5f" stroke-width="1.9"><path d="M3.5 1.2H8.5a2.3 2.3 0 0 1 2.3 2.3V5.4H23.6a2.3 2.3 0 0 1 2.3 2.3V18.8a2.3 2.3 0 0 1-2.3 2.3H3.5a2.3 2.3 0 0 1-2.3-2.3V3.5a2.3 2.3 0 0 1 2.3-2.3Z"/></svg><div class="tx">Nutanix <span class="k">제어</span> (5)</div><svg width="24" height="24" viewBox="0 0 24 24" style="left:482px;top:13px"><path fill="#8e8e9a" fill-rule="evenodd" d="M9.90 4.07L10.10 1.13 L14.70 1.13 L14.90 4.07A8.60 8.60 0 0 1 16.45 4.71L18.67 2.78 L21.92 6.03 L19.99 8.25A8.60 8.60 0 0 1 20.63 9.80L23.57 10.00 L23.57 14.60 L20.63 14.80A8.60 8.60 0 0 1 19.99 16.35L21.92 18.57 L18.67 21.82 L16.45 19.89A8.60 8.60 0 0 1 14.90 20.53L14.70 23.47 L10.10 23.47 L9.90 20.53A8.60 8.60 0 0 1 8.35 19.89L6.13 21.82 L2.88 18.57 L4.81 16.35A8.60 8.60 0 0 1 4.17 14.80L1.23 14.60 L1.23 10.00 L4.17 9.80A8.60 8.60 0 0 1 4.81 8.25L2.88 6.03 L6.13 2.78 L8.35 4.71A8.60 8.60 0 0 1 9.90 4.07 ZM16.60 12.30 A4.20 4.20 0 1 0 8.20 12.30 A4.20 4.20 0 1 0 16.60 12.30 Z"/></svg></div><div class="ti" style="top:418.0px"><div class="a" style="left:38px;top:27px;width:12px;height:2px;background:#b9bdc5"></div><svg width="28" height="24" viewBox="0 0 28 24" style="left:54px;top:15px" fill="none" stroke="#565b5f" stroke-width="1.9"><path d="M3.5 1.2H8.5a2.3 2.3 0 0 1 2.3 2.3V5.4H23.6a2.3 2.3 0 0 1 2.3 2.3V18.8a2.3 2.3 0 0 1-2.3 2.3H3.5a2.3 2.3 0 0 1-2.3-2.3V3.5a2.3 2.3 0 0 1 2.3-2.3Z"/></svg><div class="tx">HP <span class="k">서버제어</span> (3)</div><svg width="24" height="24" viewBox="0 0 24 24" style="left:482px;top:13px"><path fill="#8e8e9a" fill-rule="evenodd" d="M9.90 4.07L10.10 1.13 L14.70 1.13 L14.90 4.07A8.60 8.60 0 0 1 16.45 4.71L18.67 2.78 L21.92 6.03 L19.99 8.25A8.60 8.60 0 0 1 20.63 9.80L23.57 10.00 L23.57 14.60 L20.63 14.80A8.60 8.60 0 0 1 19.99 16.35L21.92 18.57 L18.67 21.82 L16.45 19.89A8.60 8.60 0 0 1 14.90 20.53L14.70 23.47 L10.10 23.47 L9.90 20.53A8.60 8.60 0 0 1 8.35 19.89L6.13 21.82 L2.88 18.57 L4.81 16.35A8.60 8.60 0 0 1 4.17 14.80L1.23 14.60 L1.23 10.00 L4.17 9.80A8.60 8.60 0 0 1 4.81 8.25L2.88 6.03 L6.13 2.78 L8.35 4.71A8.60 8.60 0 0 1 9.90 4.07 ZM16.60 12.30 A4.20 4.20 0 1 0 8.20 12.30 A4.20 4.20 0 1 0 16.60 12.30 Z"/></svg></div><div class="ti" style="top:470.5px"><div class="a" style="left:38px;top:27px;width:12px;height:2px;background:#b9bdc5"></div><svg width="28" height="24" viewBox="0 0 28 24" style="left:54px;top:15px" fill="none" stroke="#565b5f" stroke-width="1.9"><path d="M3.5 1.2H8.5a2.3 2.3 0 0 1 2.3 2.3V5.4H23.6a2.3 2.3 0 0 1 2.3 2.3V18.8a2.3 2.3 0 0 1-2.3 2.3H3.5a2.3 2.3 0 0 1-2.3-2.3V3.5a2.3 2.3 0 0 1 2.3-2.3Z"/></svg><div class="tx">IBM <span class="k">서버제어</span> (3)</div><svg width="24" height="24" viewBox="0 0 24 24" style="left:482px;top:13px"><path fill="#8e8e9a" fill-rule="evenodd" d="M9.90 4.07L10.10 1.13 L14.70 1.13 L14.90 4.07A8.60 8.60 0 0 1 16.45 4.71L18.67 2.78 L21.92 6.03 L19.99 8.25A8.60 8.60 0 0 1 20.63 9.80L23.57 10.00 L23.57 14.60 L20.63 14.80A8.60 8.60 0 0 1 19.99 16.35L21.92 18.57 L18.67 21.82 L16.45 19.89A8.60 8.60 0 0 1 14.90 20.53L14.70 23.47 L10.10 23.47 L9.90 20.53A8.60 8.60 0 0 1 8.35 19.89L6.13 21.82 L2.88 18.57 L4.81 16.35A8.60 8.60 0 0 1 4.17 14.80L1.23 14.60 L1.23 10.00 L4.17 9.80A8.60 8.60 0 0 1 4.81 8.25L2.88 6.03 L6.13 2.78 L8.35 4.71A8.60 8.60 0 0 1 9.90 4.07 ZM16.60 12.30 A4.20 4.20 0 1 0 8.20 12.30 A4.20 4.20 0 1 0 16.60 12.30 Z"/></svg></div><div class="ti" style="top:523.0px"><div class="a" style="left:38px;top:27px;width:12px;height:2px;background:#b9bdc5"></div><svg width="28" height="24" viewBox="0 0 28 24" style="left:54px;top:15px" fill="none" stroke="#565b5f" stroke-width="1.9"><path d="M3.5 1.2H8.5a2.3 2.3 0 0 1 2.3 2.3V5.4H23.6a2.3 2.3 0 0 1 2.3 2.3V18.8a2.3 2.3 0 0 1-2.3 2.3H3.5a2.3 2.3 0 0 1-2.3-2.3V3.5a2.3 2.3 0 0 1 2.3-2.3Z"/></svg><div class="tx">Dell <span class="k">서버제어</span> (3)</div><svg width="24" height="24" viewBox="0 0 24 24" style="left:482px;top:13px"><path fill="#8e8e9a" fill-rule="evenodd" d="M9.90 4.07L10.10 1.13 L14.70 1.13 L14.90 4.07A8.60 8.60 0 0 1 16.45 4.71L18.67 2.78 L21.92 6.03 L19.99 8.25A8.60 8.60 0 0 1 20.63 9.80L23.57 10.00 L23.57 14.60 L20.63 14.80A8.60 8.60 0 0 1 19.99 16.35L21.92 18.57 L18.67 21.82 L16.45 19.89A8.60 8.60 0 0 1 14.90 20.53L14.70 23.47 L10.10 23.47 L9.90 20.53A8.60 8.60 0 0 1 8.35 19.89L6.13 21.82 L2.88 18.57 L4.81 16.35A8.60 8.60 0 0 1 4.17 14.80L1.23 14.60 L1.23 10.00 L4.17 9.80A8.60 8.60 0 0 1 4.81 8.25L2.88 6.03 L6.13 2.78 L8.35 4.71A8.60 8.60 0 0 1 9.90 4.07 ZM16.60 12.30 A4.20 4.20 0 1 0 8.20 12.30 A4.20 4.20 0 1 0 16.60 12.30 Z"/></svg></div><div class="ti" style="top:575.5px"><div class="a" style="left:38px;top:27px;width:12px;height:2px;background:#b9bdc5"></div><svg width="28" height="24" viewBox="0 0 28 24" style="left:54px;top:15px" fill="none" stroke="#565b5f" stroke-width="1.9"><path d="M3.5 1.2H8.5a2.3 2.3 0 0 1 2.3 2.3V5.4H23.6a2.3 2.3 0 0 1 2.3 2.3V18.8a2.3 2.3 0 0 1-2.3 2.3H3.5a2.3 2.3 0 0 1-2.3-2.3V3.5a2.3 2.3 0 0 1 2.3-2.3Z"/></svg><div class="tx">IBM Storage(v7000) (5)</div><svg width="24" height="24" viewBox="0 0 24 24" style="left:482px;top:13px"><path fill="#8e8e9a" fill-rule="evenodd" d="M9.90 4.07L10.10 1.13 L14.70 1.13 L14.90 4.07A8.60 8.60 0 0 1 16.45 4.71L18.67 2.78 L21.92 6.03 L19.99 8.25A8.60 8.60 0 0 1 20.63 9.80L23.57 10.00 L23.57 14.60 L20.63 14.80A8.60 8.60 0 0 1 19.99 16.35L21.92 18.57 L18.67 21.82 L16.45 19.89A8.60 8.60 0 0 1 14.90 20.53L14.70 23.47 L10.10 23.47 L9.90 20.53A8.60 8.60 0 0 1 8.35 19.89L6.13 21.82 L2.88 18.57 L4.81 16.35A8.60 8.60 0 0 1 4.17 14.80L1.23 14.60 L1.23 10.00 L4.17 9.80A8.60 8.60 0 0 1 4.81 8.25L2.88 6.03 L6.13 2.78 L8.35 4.71A8.60 8.60 0 0 1 9.90 4.07 ZM16.60 12.30 A4.20 4.20 0 1 0 8.20 12.30 A4.20 4.20 0 1 0 16.60 12.30 Z"/></svg></div><div class="ti" style="top:628.0px"><div class="a" style="left:38px;top:27px;width:12px;height:2px;background:#b9bdc5"></div><svg width="28" height="24" viewBox="0 0 28 24" style="left:54px;top:15px" fill="none" stroke="#565b5f" stroke-width="1.9"><path d="M3.5 1.2H8.5a2.3 2.3 0 0 1 2.3 2.3V5.4H23.6a2.3 2.3 0 0 1 2.3 2.3V18.8a2.3 2.3 0 0 1-2.3 2.3H3.5a2.3 2.3 0 0 1-2.3-2.3V3.5a2.3 2.3 0 0 1 2.3-2.3Z"/></svg><div class="tx">OracleVm <span class="k">제어</span> (3)</div><svg width="24" height="24" viewBox="0 0 24 24" style="left:482px;top:13px"><path fill="#8e8e9a" fill-rule="evenodd" d="M9.90 4.07L10.10 1.13 L14.70 1.13 L14.90 4.07A8.60 8.60 0 0 1 16.45 4.71L18.67 2.78 L21.92 6.03 L19.99 8.25A8.60 8.60 0 0 1 20.63 9.80L23.57 10.00 L23.57 14.60 L20.63 14.80A8.60 8.60 0 0 1 19.99 16.35L21.92 18.57 L18.67 21.82 L16.45 19.89A8.60 8.60 0 0 1 14.90 20.53L14.70 23.47 L10.10 23.47 L9.90 20.53A8.60 8.60 0 0 1 8.35 19.89L6.13 21.82 L2.88 18.57 L4.81 16.35A8.60 8.60 0 0 1 4.17 14.80L1.23 14.60 L1.23 10.00 L4.17 9.80A8.60 8.60 0 0 1 4.81 8.25L2.88 6.03 L6.13 2.78 L8.35 4.71A8.60 8.60 0 0 1 9.90 4.07 ZM16.60 12.30 A4.20 4.20 0 1 0 8.20 12.30 A4.20 4.20 0 1 0 16.60 12.30 Z"/></svg></div><div class="ti" style="top:680.5px"><div class="a" style="left:38px;top:27px;width:12px;height:2px;background:#b9bdc5"></div><svg width="28" height="24" viewBox="0 0 28 24" style="left:54px;top:15px" fill="none" stroke="#565b5f" stroke-width="1.9"><path d="M3.5 1.2H8.5a2.3 2.3 0 0 1 2.3 2.3V5.4H23.6a2.3 2.3 0 0 1 2.3 2.3V18.8a2.3 2.3 0 0 1-2.3 2.3H3.5a2.3 2.3 0 0 1-2.3-2.3V3.5a2.3 2.3 0 0 1 2.3-2.3Z"/></svg><div class="tx"><span class="k">공통</span> (5)</div><svg width="24" height="24" viewBox="0 0 24 24" style="left:482px;top:13px"><path fill="#8e8e9a" fill-rule="evenodd" d="M9.90 4.07L10.10 1.13 L14.70 1.13 L14.90 4.07A8.60 8.60 0 0 1 16.45 4.71L18.67 2.78 L21.92 6.03 L19.99 8.25A8.60 8.60 0 0 1 20.63 9.80L23.57 10.00 L23.57 14.60 L20.63 14.80A8.60 8.60 0 0 1 19.99 16.35L21.92 18.57 L18.67 21.82 L16.45 19.89A8.60 8.60 0 0 1 14.90 20.53L14.70 23.47 L10.10 23.47 L9.90 20.53A8.60 8.60 0 0 1 8.35 19.89L6.13 21.82 L2.88 18.57 L4.81 16.35A8.60 8.60 0 0 1 4.17 14.80L1.23 14.60 L1.23 10.00 L4.17 9.80A8.60 8.60 0 0 1 4.81 8.25L2.88 6.03 L6.13 2.78 L8.35 4.71A8.60 8.60 0 0 1 9.90 4.07 ZM16.60 12.30 A4.20 4.20 0 1 0 8.20 12.30 A4.20 4.20 0 1 0 16.60 12.30 Z"/></svg></div><div class="ti" style="top:733.0px"><div class="a" style="left:38px;top:27px;width:12px;height:2px;background:#b9bdc5"></div><svg width="28" height="24" viewBox="0 0 28 24" style="left:54px;top:15px" fill="none" stroke="#565b5f" stroke-width="1.9"><path d="M3.5 1.2H8.5a2.3 2.3 0 0 1 2.3 2.3V5.4H23.6a2.3 2.3 0 0 1 2.3 2.3V18.8a2.3 2.3 0 0 1-2.3 2.3H3.5a2.3 2.3 0 0 1-2.3-2.3V3.5a2.3 2.3 0 0 1 2.3-2.3Z"/></svg><div class="tx">Hitachi UR (6)</div><svg width="24" height="24" viewBox="0 0 24 24" style="left:482px;top:13px"><path fill="#8e8e9a" fill-rule="evenodd" d="M9.90 4.07L10.10 1.13 L14.70 1.13 L14.90 4.07A8.60 8.60 0 0 1 16.45 4.71L18.67 2.78 L21.92 6.03 L19.99 8.25A8.60 8.60 0 0 1 20.63 9.80L23.57 10.00 L23.57 14.60 L20.63 14.80A8.60 8.60 0 0 1 19.99 16.35L21.92 18.57 L18.67 21.82 L16.45 19.89A8.60 8.60 0 0 1 14.90 20.53L14.70 23.47 L10.10 23.47 L9.90 20.53A8.60 8.60 0 0 1 8.35 19.89L6.13 21.82 L2.88 18.57 L4.81 16.35A8.60 8.60 0 0 1 4.17 14.80L1.23 14.60 L1.23 10.00 L4.17 9.80A8.60 8.60 0 0 1 4.81 8.25L2.88 6.03 L6.13 2.78 L8.35 4.71A8.60 8.60 0 0 1 9.90 4.07 ZM16.60 12.30 A4.20 4.20 0 1 0 8.20 12.30 A4.20 4.20 0 1 0 16.60 12.30 Z"/></svg></div><div class="ti" style="top:785.5px"><div class="a" style="left:38px;top:27px;width:12px;height:2px;background:#b9bdc5"></div><svg width="28" height="24" viewBox="0 0 28 24" style="left:54px;top:15px" fill="none" stroke="#565b5f" stroke-width="1.9"><path d="M3.5 1.2H8.5a2.3 2.3 0 0 1 2.3 2.3V5.4H23.6a2.3 2.3 0 0 1 2.3 2.3V18.8a2.3 2.3 0 0 1-2.3 2.3H3.5a2.3 2.3 0 0 1-2.3-2.3V3.5a2.3 2.3 0 0 1 2.3-2.3Z"/></svg><div class="tx">Xen Server (2)</div><svg width="24" height="24" viewBox="0 0 24 24" style="left:482px;top:13px"><path fill="#8e8e9a" fill-rule="evenodd" d="M9.90 4.07L10.10 1.13 L14.70 1.13 L14.90 4.07A8.60 8.60 0 0 1 16.45 4.71L18.67 2.78 L21.92 6.03 L19.99 8.25A8.60 8.60 0 0 1 20.63 9.80L23.57 10.00 L23.57 14.60 L20.63 14.80A8.60 8.60 0 0 1 19.99 16.35L21.92 18.57 L18.67 21.82 L16.45 19.89A8.60 8.60 0 0 1 14.90 20.53L14.70 23.47 L10.10 23.47 L9.90 20.53A8.60 8.60 0 0 1 8.35 19.89L6.13 21.82 L2.88 18.57 L4.81 16.35A8.60 8.60 0 0 1 4.17 14.80L1.23 14.60 L1.23 10.00 L4.17 9.80A8.60 8.60 0 0 1 4.81 8.25L2.88 6.03 L6.13 2.78 L8.35 4.71A8.60 8.60 0 0 1 9.90 4.07 ZM16.60 12.30 A4.20 4.20 0 1 0 8.20 12.30 A4.20 4.20 0 1 0 16.60 12.30 Z"/></svg></div><div class="ti" style="top:838.0px"><div class="a" style="left:38px;top:27px;width:12px;height:2px;background:#b9bdc5"></div><svg width="28" height="24" viewBox="0 0 28 24" style="left:54px;top:15px" fill="none" stroke="#565b5f" stroke-width="1.9"><path d="M3.5 1.2H8.5a2.3 2.3 0 0 1 2.3 2.3V5.4H23.6a2.3 2.3 0 0 1 2.3 2.3V18.8a2.3 2.3 0 0 1-2.3 2.3H3.5a2.3 2.3 0 0 1-2.3-2.3V3.5a2.3 2.3 0 0 1 2.3-2.3Z"/></svg><div class="tx">Oracle Database (2)</div><svg width="24" height="24" viewBox="0 0 24 24" style="left:482px;top:13px"><path fill="#8e8e9a" fill-rule="evenodd" d="M9.90 4.07L10.10 1.13 L14.70 1.13 L14.90 4.07A8.60 8.60 0 0 1 16.45 4.71L18.67 2.78 L21.92 6.03 L19.99 8.25A8.60 8.60 0 0 1 20.63 9.80L23.57 10.00 L23.57 14.60 L20.63 14.80A8.60 8.60 0 0 1 19.99 16.35L21.92 18.57 L18.67 21.82 L16.45 19.89A8.60 8.60 0 0 1 14.90 20.53L14.70 23.47 L10.10 23.47 L9.90 20.53A8.60 8.60 0 0 1 8.35 19.89L6.13 21.82 L2.88 18.57 L4.81 16.35A8.60 8.60 0 0 1 4.17 14.80L1.23 14.60 L1.23 10.00 L4.17 9.80A8.60 8.60 0 0 1 4.81 8.25L2.88 6.03 L6.13 2.78 L8.35 4.71A8.60 8.60 0 0 1 9.90 4.07 ZM16.60 12.30 A4.20 4.20 0 1 0 8.20 12.30 A4.20 4.20 0 1 0 16.60 12.30 Z"/></svg></div><div class="ti" style="top:890.5px"><div class="a" style="left:38px;top:27px;width:12px;height:2px;background:#b9bdc5"></div><svg width="28" height="24" viewBox="0 0 28 24" style="left:54px;top:15px" fill="none" stroke="#565b5f" stroke-width="1.9"><path d="M3.5 1.2H8.5a2.3 2.3 0 0 1 2.3 2.3V5.4H23.6a2.3 2.3 0 0 1 2.3 2.3V18.8a2.3 2.3 0 0 1-2.3 2.3H3.5a2.3 2.3 0 0 1-2.3-2.3V3.5a2.3 2.3 0 0 1 2.3-2.3Z"/></svg><div class="tx">MS-SQL (2)</div><svg width="24" height="24" viewBox="0 0 24 24" style="left:482px;top:13px"><path fill="#8e8e9a" fill-rule="evenodd" d="M9.90 4.07L10.10 1.13 L14.70 1.13 L14.90 4.07A8.60 8.60 0 0 1 16.45 4.71L18.67 2.78 L21.92 6.03 L19.99 8.25A8.60 8.60 0 0 1 20.63 9.80L23.57 10.00 L23.57 14.60 L20.63 14.80A8.60 8.60 0 0 1 19.99 16.35L21.92 18.57 L18.67 21.82 L16.45 19.89A8.60 8.60 0 0 1 14.90 20.53L14.70 23.47 L10.10 23.47 L9.90 20.53A8.60 8.60 0 0 1 8.35 19.89L6.13 21.82 L2.88 18.57 L4.81 16.35A8.60 8.60 0 0 1 4.17 14.80L1.23 14.60 L1.23 10.00 L4.17 9.80A8.60 8.60 0 0 1 4.81 8.25L2.88 6.03 L6.13 2.78 L8.35 4.71A8.60 8.60 0 0 1 9.90 4.07 ZM16.60 12.30 A4.20 4.20 0 1 0 8.20 12.30 A4.20 4.20 0 1 0 16.60 12.30 Z"/></svg></div><div class="ti" style="top:943.0px"><div class="a" style="left:38px;top:27px;width:12px;height:2px;background:#b9bdc5"></div><svg width="28" height="24" viewBox="0 0 28 24" style="left:54px;top:15px" fill="none" stroke="#565b5f" stroke-width="1.9"><path d="M3.5 1.2H8.5a2.3 2.3 0 0 1 2.3 2.3V5.4H23.6a2.3 2.3 0 0 1 2.3 2.3V18.8a2.3 2.3 0 0 1-2.3 2.3H3.5a2.3 2.3 0 0 1-2.3-2.3V3.5a2.3 2.3 0 0 1 2.3-2.3Z"/></svg><div class="tx">WDRBD (17)</div><svg width="24" height="24" viewBox="0 0 24 24" style="left:482px;top:13px"><path fill="#8e8e9a" fill-rule="evenodd" d="M9.90 4.07L10.10 1.13 L14.70 1.13 L14.90 4.07A8.60 8.60 0 0 1 16.45 4.71L18.67 2.78 L21.92 6.03 L19.99 8.25A8.60 8.60 0 0 1 20.63 9.80L23.57 10.00 L23.57 14.60 L20.63 14.80A8.60 8.60 0 0 1 19.99 16.35L21.92 18.57 L18.67 21.82 L16.45 19.89A8.60 8.60 0 0 1 14.90 20.53L14.70 23.47 L10.10 23.47 L9.90 20.53A8.60 8.60 0 0 1 8.35 19.89L6.13 21.82 L2.88 18.57 L4.81 16.35A8.60 8.60 0 0 1 4.17 14.80L1.23 14.60 L1.23 10.00 L4.17 9.80A8.60 8.60 0 0 1 4.81 8.25L2.88 6.03 L6.13 2.78 L8.35 4.71A8.60 8.60 0 0 1 9.90 4.07 ZM16.60 12.30 A4.20 4.20 0 1 0 8.20 12.30 A4.20 4.20 0 1 0 16.60 12.30 Z"/></svg></div></div><div class="a" style="left:950px;top:312px;font-size:23px;font-weight:bold;color:#222"><span class="k">실행</span> <span class="k">명령</span><span style="font-size:24px;margin-left:1px">(166)</span></div><div class="a" style="left:1116px;top:319px;width:1px;height:22px;background:#a9b3c6"></div><div class="btn" style="left:1132px;top:310px;width:108px;height:44px;border-color:#d4d6da"><svg width="20" height="20" viewBox="0 0 20 20" style="left:16px;top:11px"><path d="M1 1.500h17.500l-6.500 7.500 .3 8-3.500 2.500V9z" fill="#777b84" stroke="#777b84" stroke-width="1" stroke-linejoin="round"/></svg><div class="tx" style="left:41px;top:7px;font-size:18px"><span class="k">필터</span></div><svg width="14" height="8" viewBox="0 0 14 8" style="left:79px;top:19px"><path d="M0 0h13l-6.5 7z" fill="#333"/></svg></div><div class="a" style="left:2049px;top:304px;width:227px;height:45px;background:#fff;border:1px solid #bdbdbd"></div><div class="a" style="left:2234px;top:311px;width:1px;height:32px;background:#c5c7cb"></div><svg width="22" height="22" viewBox="0 0 22 22" style="left:2245px;top:318px" fill="none" stroke="#8f8f8f" stroke-width="3.2"><circle cx="9.5" cy="9" r="6.6"/><path d="M14 14l6 6" stroke-linecap="round"/></svg><div class="a" style="left:2292px;top:312px;width:1px;height:30px;background:#b8bcc6"></div><div class="a" style="left:2308px;top:302px;width:170px;height:49px;background:#e9ebef;border:1px solid #dfe2e7;border-radius:4px"><svg width="18" height="18" viewBox="0 0 18 18" style="left:19px;top:13px" stroke="#dcdfe5" stroke-width="2"><path d="M9 1v16M1 9h16"/></svg><div class="a" style="left:44px;top:9px;font-size:18px;color:#d3d7de"><span class="k">실행</span> <span class="k">명령</span> <span class="k">추가</span></div></div><div class="a" style="left:949px;top:364px;width:1506px;height:52px;background:#f2f2f2;border-top:1px solid #b9b9b9;border-bottom:1px solid #b9b9b9"></div><div class="a" style="left:970px;top:377px;width:24px;height:24px;border:2px solid #a9b0be;background:#fff"></div><div class="th" style="left:1022px"><span class="k">잠금</span></div><svg width="12" height="18" viewBox="0 0 12 18" style="left:1066px;top:381px"><path d="M6 0l6 7H0zM6 18l6-7H0z" fill="#555"/></svg><div class="th" style="left:1098px"><span class="k">이름</span></div><svg width="12" height="18" viewBox="0 0 12 18" style="left:1142px;top:381px"><path d="M6 0l6 7H0zM6 18l6-7H0z" fill="#555"/></svg><div class="th" style="left:1473px"><span class="k">설명</span></div><svg width="12" height="18" viewBox="0 0 12 18" style="left:1516px;top:381px"><path d="M6 0l6 7H0zM6 18l6-7H0z" fill="#555"/></svg><div class="th" style="left:2065px"><span class="k">즐겨찾기</span></div><svg width="12" height="18" viewBox="0 0 12 18" style="left:2145px;top:381px"><path d="M6 0l6 7H0zM6 18l6-7H0z" fill="#555"/></svg><div class="th" style="left:2181px"><span class="k">유형</span></div><svg width="12" height="18" viewBox="0 0 12 18" style="left:2225px;top:381px"><path d="M6 0l6 7H0zM6 18l6-7H0z" fill="#555"/></svg><div class="th" style="left:2275px"><span class="k">이력</span></div><div class="th" style="left:2363px"><span class="k">복사</span></div><div class="row" style="top:416px;background:#fff"><div class="cb"></div><svg width="28" height="36" viewBox="0 0 28 36" style="left:162px;top:9px"><path d="M8 1.5h18.5v27h-5" fill="#c9d8f0" stroke="#8d9ab0" stroke-width="1.6"/><rect x="1.5" y="6.5" width="20" height="28" fill="#fff" stroke="#8d9ab0" stroke-width="1.8"/><path d="M5 13h2M9 13h9M5 17h2M9 17h9M5 21h13M5 25h13" stroke="#5b8bdb" stroke-width="1.8"/><path d="M4 6.5V4h18v2.5" fill="#c9d8f0" stroke="#8d9ab0" stroke-width="1.2"/></svg><div class="nm"><span class="k">파일</span> <span class="k">업로드</span> (GAM -&gt; Agent)</div><div class="ds"><span class="k">관제서버의</span> <span class="k">파일을</span> <span class="k">에이전트를</span> <span class="k">이용하여</span> <span class="k">원격노드로</span> <span class="k">복사합니다.</span></div><svg width="26" height="26" viewBox="0 0 26 26" style="left:1247px;top:15px"><path fill="#bcc3d1" stroke="#8a92a2" stroke-width="1.5" stroke-linejoin="round" fill-rule="evenodd" d="M9.70 5.28L10.70 2.04 L15.30 2.04 L16.30 5.28A8.40 8.40 0 0 1 16.13 5.20L19.12 3.62 L22.38 6.88 L20.80 9.87A8.40 8.40 0 0 1 20.72 9.70L23.96 10.70 L23.96 15.30 L20.72 16.30A8.40 8.40 0 0 1 20.80 16.13L22.38 19.12 L19.12 22.38 L16.13 20.80A8.40 8.40 0 0 1 16.30 20.72L15.30 23.96 L10.70 23.96 L9.70 20.72A8.40 8.40 0 0 1 9.87 20.80L6.88 22.38 L3.62 19.12 L5.20 16.13A8.40 8.40 0 0 1 5.28 16.30L2.04 15.30 L2.04 10.70 L5.28 9.70A8.40 8.40 0 0 1 5.20 9.87L3.62 6.88 L6.88 3.62 L9.87 5.20A8.40 8.40 0 0 1 9.70 5.28 ZM16.90 13.00 A3.90 3.90 0 1 0 9.10 13.00 A3.90 3.90 0 1 0 16.90 13.00 Z"/></svg><div class="vr">v.1</div><div class="cp"><svg width="24" height="24" viewBox="0 0 24 24" style="left:26px;top:7px" fill="none" stroke="#8e8e8e" stroke-width="1.4"><rect x="4.5" y="1.5" width="15.5" height="15.5"/><rect x="1.5" y="4.5" width="15.5" height="15.5" fill="#fff"/><path d="M9.25 8.5v7.5M5.5 12.25h7.5"/></svg></div><div class="cp2"></div></div><div class="row" style="top:471px;background:#fff"><div class="cb"></div><svg width="28" height="36" viewBox="0 0 28 36" style="left:162px;top:9px"><path d="M8 1.5h18.5v27h-5" fill="#c9d8f0" stroke="#8d9ab0" stroke-width="1.6"/><rect x="1.5" y="6.5" width="20" height="28" fill="#fff" stroke="#8d9ab0" stroke-width="1.8"/><path d="M5 13h2M9 13h9M5 17h2M9 17h9M5 21h13M5 25h13" stroke="#5b8bdb" stroke-width="1.8"/><path d="M4 6.5V4h18v2.5" fill="#c9d8f0" stroke="#8d9ab0" stroke-width="1.2"/></svg><div class="nm"><span class="k">파일</span> <span class="k">가져오기</span> (Agent -&gt; GAM)</div><div class="ds"><span class="k">원격노드의</span> <span class="k">파일을</span> <span class="k">에이전트를</span> <span class="k">이용하여</span> <span class="k">관제서버로</span> <span class="k">복사합니다.</span></div><svg width="26" height="26" viewBox="0 0 26 26" style="left:1247px;top:15px"><path fill="#bcc3d1" stroke="#8a92a2" stroke-width="1.5" stroke-linejoin="round" fill-rule="evenodd" d="M9.70 5.28L10.70 2.04 L15.30 2.04 L16.30 5.28A8.40 8.40 0 0 1 16.13 5.20L19.12 3.62 L22.38 6.88 L20.80 9.87A8.40 8.40 0 0 1 20.72 9.70L23.96 10.70 L23.96 15.30 L20.72 16.30A8.40 8.40 0 0 1 20.80 16.13L22.38 19.12 L19.12 22.38 L16.13 20.80A8.40 8.40 0 0 1 16.30 20.72L15.30 23.96 L10.70 23.96 L9.70 20.72A8.40 8.40 0 0 1 9.87 20.80L6.88 22.38 L3.62 19.12 L5.20 16.13A8.40 8.40 0 0 1 5.28 16.30L2.04 15.30 L2.04 10.70 L5.28 9.70A8.40 8.40 0 0 1 5.20 9.87L3.62 6.88 L6.88 3.62 L9.87 5.20A8.40 8.40 0 0 1 9.70 5.28 ZM16.90 13.00 A3.90 3.90 0 1 0 9.10 13.00 A3.90 3.90 0 1 0 16.90 13.00 Z"/></svg><div class="vr">v.1</div><div class="cp"><svg width="24" height="24" viewBox="0 0 24 24" style="left:26px;top:7px" fill="none" stroke="#8e8e8e" stroke-width="1.4"><rect x="4.5" y="1.5" width="15.5" height="15.5"/><rect x="1.5" y="4.5" width="15.5" height="15.5" fill="#fff"/><path d="M9.25 8.5v7.5M5.5 12.25h7.5"/></svg></div><div class="cp2"></div></div><div class="row" style="top:526px;background:#fff"><div class="cb"></div><svg width="28" height="36" viewBox="0 0 28 36" style="left:162px;top:9px"><path d="M8 1.5h18.5v27h-5" fill="#c9d8f0" stroke="#8d9ab0" stroke-width="1.6"/><rect x="1.5" y="6.5" width="20" height="28" fill="#fff" stroke="#8d9ab0" stroke-width="1.8"/><path d="M5 13h2M9 13h9M5 17h2M9 17h9M5 21h13M5 25h13" stroke="#5b8bdb" stroke-width="1.8"/><path d="M4 6.5V4h18v2.5" fill="#c9d8f0" stroke="#8d9ab0" stroke-width="1.2"/></svg><div class="nm"><span class="k">사용자</span> <span class="k">정의</span> <span class="k">스크립트</span> <span class="k">실행</span></div><div class="ds"><span class="k">사용자가</span> <span class="k">스크립트</span> <span class="k">내용을</span> <span class="k">작성합니다.</span></div><svg width="26" height="26" viewBox="0 0 26 26" style="left:1247px;top:15px"><path fill="#bcc3d1" stroke="#8a92a2" stroke-width="1.5" stroke-linejoin="round" fill-rule="evenodd" d="M9.70 5.28L10.70 2.04 L15.30 2.04 L16.30 5.28A8.40 8.40 0 0 1 16.13 5.20L19.12 3.62 L22.38 6.88 L20.80 9.87A8.40 8.40 0 0 1 20.72 9.70L23.96 10.70 L23.96 15.30 L20.72 16.30A8.40 8.40 0 0 1 20.80 16.13L22.38 19.12 L19.12 22.38 L16.13 20.80A8.40 8.40 0 0 1 16.30 20.72L15.30 23.96 L10.70 23.96 L9.70 20.72A8.40 8.40 0 0 1 9.87 20.80L6.88 22.38 L3.62 19.12 L5.20 16.13A8.40 8.40 0 0 1 5.28 16.30L2.04 15.30 L2.04 10.70 L5.28 9.70A8.40 8.40 0 0 1 5.20 9.87L3.62 6.88 L6.88 3.62 L9.87 5.20A8.40 8.40 0 0 1 9.70 5.28 ZM16.90 13.00 A3.90 3.90 0 1 0 9.10 13.00 A3.90 3.90 0 1 0 16.90 13.00 Z"/></svg><div class="vr">v.1</div><div class="cp"><svg width="24" height="24" viewBox="0 0 24 24" style="left:26px;top:7px" fill="none" stroke="#8e8e8e" stroke-width="1.4"><rect x="4.5" y="1.5" width="15.5" height="15.5"/><rect x="1.5" y="4.5" width="15.5" height="15.5" fill="#fff"/><path d="M9.25 8.5v7.5M5.5 12.25h7.5"/></svg></div><div class="cp2"></div></div><div class="row" style="top:581px;background:#fff"><div class="cb"></div><svg width="28" height="36" viewBox="0 0 28 36" style="left:162px;top:9px"><path d="M8 1.5h18.5v27h-5" fill="#c9d8f0" stroke="#8d9ab0" stroke-width="1.6"/><rect x="1.5" y="6.5" width="20" height="28" fill="#fff" stroke="#8d9ab0" stroke-width="1.8"/><path d="M5 13h2M9 13h9M5 17h2M9 17h9M5 21h13M5 25h13" stroke="#5b8bdb" stroke-width="1.8"/><path d="M4 6.5V4h18v2.5" fill="#c9d8f0" stroke="#8d9ab0" stroke-width="1.2"/></svg><div class="nm"><span class="k">사용자</span> <span class="k">정의</span> <span class="k">명령어</span> <span class="k">실행</span></div><div class="ds"><span class="k">사용자가</span> <span class="k">정의한</span> <span class="k">스크립트</span> <span class="k">파일이나</span> <span class="k">명령어를</span> <span class="k">실행합니다.</span></div><svg width="26" height="26" viewBox="0 0 26 26" style="left:1247px;top:15px"><path fill="#bcc3d1" stroke="#8a92a2" stroke-width="1.5" stroke-linejoin="round" fill-rule="evenodd" d="M9.70 5.28L10.70 2.04 L15.30 2.04 L16.30 5.28A8.40 8.40 0 0 1 16.13 5.20L19.12 3.62 L22.38 6.88 L20.80 9.87A8.40 8.40 0 0 1 20.72 9.70L23.96 10.70 L23.96 15.30 L20.72 16.30A8.40 8.40 0 0 1 20.80 16.13L22.38 19.12 L19.12 22.38 L16.13 20.80A8.40 8.40 0 0 1 16.30 20.72L15.30 23.96 L10.70 23.96 L9.70 20.72A8.40 8.40 0 0 1 9.87 20.80L6.88 22.38 L3.62 19.12 L5.20 16.13A8.40 8.40 0 0 1 5.28 16.30L2.04 15.30 L2.04 10.70 L5.28 9.70A8.40 8.40 0 0 1 5.20 9.87L3.62 6.88 L6.88 3.62 L9.87 5.20A8.40 8.40 0 0 1 9.70 5.28 ZM16.90 13.00 A3.90 3.90 0 1 0 9.10 13.00 A3.90 3.90 0 1 0 16.90 13.00 Z"/></svg><div class="vr">v.1</div><div class="cp"><svg width="24" height="24" viewBox="0 0 24 24" style="left:26px;top:7px" fill="none" stroke="#8e8e8e" stroke-width="1.4"><rect x="4.5" y="1.5" width="15.5" height="15.5"/><rect x="1.5" y="4.5" width="15.5" height="15.5" fill="#fff"/><path d="M9.25 8.5v7.5M5.5 12.25h7.5"/></svg></div><div class="cp2"></div></div><div class="row" style="top:636px;background:#fff"><div class="cb"></div><svg width="28" height="36" viewBox="0 0 28 36" style="left:162px;top:9px"><path d="M8 1.5h18.5v27h-5" fill="#c9d8f0" stroke="#8d9ab0" stroke-width="1.6"/><rect x="1.5" y="6.5" width="20" height="28" fill="#fff" stroke="#8d9ab0" stroke-width="1.8"/><path d="M5 13h2M9 13h9M5 17h2M9 17h9M5 21h13M5 25h13" stroke="#5b8bdb" stroke-width="1.8"/><path d="M4 6.5V4h18v2.5" fill="#c9d8f0" stroke="#8d9ab0" stroke-width="1.2"/></svg><div class="nm">Ping <span class="k">확인</span></div><div class="ds"><span class="k">핑</span>(Ping)<span class="k">을</span> <span class="k">확인합니다.</span></div><svg width="26" height="26" viewBox="0 0 26 26" style="left:1247px;top:15px"><circle cx="13" cy="8" r="6.5" fill="#c9d9f4" stroke="#3f73c8" stroke-width="1.8"/><path d="M2 24.5c0-5 4-7.5 8-8.5h6c4 1 8 3.5 8 8.5z" fill="#c9d9f4" stroke="#3f73c8" stroke-width="1.8" stroke-linejoin="round"/></svg><div class="vr">v.1</div><div class="cp"><svg width="24" height="24" viewBox="0 0 24 24" style="left:26px;top:7px" fill="none" stroke="#3c3c3c" stroke-width="1.4"><rect x="4.5" y="1.5" width="15.5" height="15.5"/><rect x="1.5" y="4.5" width="15.5" height="15.5" fill="#fff"/><path d="M9.25 8.5v7.5M5.5 12.25h7.5"/></svg></div><div class="cp2"></div></div><div class="row" style="top:691px;background:#fff"><div class="cb"></div><svg width="28" height="36" viewBox="0 0 28 36" style="left:162px;top:9px"><path d="M8 1.5h18.5v27h-5" fill="#c9d8f0" stroke="#8d9ab0" stroke-width="1.6"/><rect x="1.5" y="6.5" width="20" height="28" fill="#fff" stroke="#8d9ab0" stroke-width="1.8"/><path d="M5 13h2M9 13h9M5 17h2M9 17h9M5 21h13M5 25h13" stroke="#5b8bdb" stroke-width="1.8"/><path d="M4 6.5V4h18v2.5" fill="#c9d8f0" stroke="#8d9ab0" stroke-width="1.2"/></svg><div class="nm"><span class="k">포트</span> <span class="k">확인</span></div><div class="ds"><span class="k">포트를</span> <span class="k">확인합니다.</span></div><svg width="26" height="26" viewBox="0 0 26 26" style="left:1247px;top:15px"><circle cx="13" cy="8" r="6.5" fill="#c9d9f4" stroke="#3f73c8" stroke-width="1.8"/><path d="M2 24.5c0-5 4-7.5 8-8.5h6c4 1 8 3.5 8 8.5z" fill="#c9d9f4" stroke="#3f73c8" stroke-width="1.8" stroke-linejoin="round"/></svg><div class="vr">v.1</div><div class="cp"><svg width="24" height="24" viewBox="0 0 24 24" style="left:26px;top:7px" fill="none" stroke="#3c3c3c" stroke-width="1.4"><rect x="4.5" y="1.5" width="15.5" height="15.5"/><rect x="1.5" y="4.5" width="15.5" height="15.5" fill="#fff"/><path d="M9.25 8.5v7.5M5.5 12.25h7.5"/></svg></div><div class="cp2"></div></div><div class="row" style="top:746px;background:#fff"><div class="cb"></div><svg width="28" height="36" viewBox="0 0 28 36" style="left:162px;top:9px"><path d="M8 1.5h18.5v27h-5" fill="#c9d8f0" stroke="#8d9ab0" stroke-width="1.6"/><rect x="1.5" y="6.5" width="20" height="28" fill="#fff" stroke="#8d9ab0" stroke-width="1.8"/><path d="M5 13h2M9 13h9M5 17h2M9 17h9M5 21h13M5 25h13" stroke="#5b8bdb" stroke-width="1.8"/><path d="M4 6.5V4h18v2.5" fill="#c9d8f0" stroke="#8d9ab0" stroke-width="1.2"/></svg><div class="nm">URL <span class="k">확인</span></div><div class="ds">URL<span class="k">을</span> <span class="k">확인합니다.</span></div><svg width="26" height="26" viewBox="0 0 26 26" style="left:1247px;top:15px"><circle cx="13" cy="8" r="6.5" fill="#c9d9f4" stroke="#3f73c8" stroke-width="1.8"/><path d="M2 24.5c0-5 4-7.5 8-8.5h6c4 1 8 3.5 8 8.5z" fill="#c9d9f4" stroke="#3f73c8" stroke-width="1.8" stroke-linejoin="round"/></svg><div class="vr">v.1</div><div class="cp"><svg width="24" height="24" viewBox="0 0 24 24" style="left:26px;top:7px" fill="none" stroke="#3c3c3c" stroke-width="1.4"><rect x="4.5" y="1.5" width="15.5" height="15.5"/><rect x="1.5" y="4.5" width="15.5" height="15.5" fill="#fff"/><path d="M9.25 8.5v7.5M5.5 12.25h7.5"/></svg></div><div class="cp2"></div></div><div class="row" style="top:801px;background:#fff"><div class="cb"></div><svg width="28" height="34" viewBox="0 0 28 34" style="left:162px;top:10px"><rect x="1" y="1" width="26" height="32" fill="#fff" stroke="#8d9ab0" stroke-width="1.8"/><rect x="3" y="12" width="22" height="10" fill="#cddbf3"/><path d="M1 11.5h26M1 22.5h26" stroke="#8d9ab0" stroke-width="1.6"/><circle cx="7" cy="6" r="2.2" fill="none" stroke="#7a8498" stroke-width="1.4"/><circle cx="7" cy="17" r="2.2" fill="none" stroke="#7a8498" stroke-width="1.4"/><circle cx="7" cy="28" r="2.2" fill="none" stroke="#7a8498" stroke-width="1.4"/><path d="M13 6l2-1.5 2 1.5 2-1.5 2 1.5 2-1.5M13 17l2-1.5 2 1.5 2-1.5 2 1.5 2-1.5M13 28l2-1.5 2 1.5 2-1.5 2 1.5 2-1.5" fill="none" stroke="#7a8498" stroke-width="1.1"/></svg><div class="nm"><span class="k">서비스</span> <span class="k">그룹</span> <span class="k">온라인</span></div><div class="ds">MCCS <span class="k">서비스</span> <span class="k">그룹을</span> <span class="k">온라인</span> <span class="k">시킵니다.</span></div><svg width="26" height="26" viewBox="0 0 26 26" style="left:1247px;top:15px"><path fill="#bcc3d1" stroke="#8a92a2" stroke-width="1.5" stroke-linejoin="round" fill-rule="evenodd" d="M9.70 5.28L10.70 2.04 L15.30 2.04 L16.30 5.28A8.40 8.40 0 0 1 16.13 5.20L19.12 3.62 L22.38 6.88 L20.80 9.87A8.40 8.40 0 0 1 20.72 9.70L23.96 10.70 L23.96 15.30 L20.72 16.30A8.40 8.40 0 0 1 20.80 16.13L22.38 19.12 L19.12 22.38 L16.13 20.80A8.40 8.40 0 0 1 16.30 20.72L15.30 23.96 L10.70 23.96 L9.70 20.72A8.40 8.40 0 0 1 9.87 20.80L6.88 22.38 L3.62 19.12 L5.20 16.13A8.40 8.40 0 0 1 5.28 16.30L2.04 15.30 L2.04 10.70 L5.28 9.70A8.40 8.40 0 0 1 5.20 9.87L3.62 6.88 L6.88 3.62 L9.87 5.20A8.40 8.40 0 0 1 9.70 5.28 ZM16.90 13.00 A3.90 3.90 0 1 0 9.10 13.00 A3.90 3.90 0 1 0 16.90 13.00 Z"/></svg><div class="vr">v.1</div><div class="cp"><svg width="24" height="24" viewBox="0 0 24 24" style="left:26px;top:7px" fill="none" stroke="#8e8e8e" stroke-width="1.4"><rect x="4.5" y="1.5" width="15.5" height="15.5"/><rect x="1.5" y="4.5" width="15.5" height="15.5" fill="#fff"/><path d="M9.25 8.5v7.5M5.5 12.25h7.5"/></svg></div><div class="cp2"></div></div><div class="row" style="top:856px;background:#e9f0fc"><div class="cb"></div><svg width="28" height="34" viewBox="0 0 28 34" style="left:162px;top:10px"><rect x="1" y="1" width="26" height="32" fill="#fff" stroke="#8d9ab0" stroke-width="1.8"/><rect x="3" y="12" width="22" height="10" fill="#cddbf3"/><path d="M1 11.5h26M1 22.5h26" stroke="#8d9ab0" stroke-width="1.6"/><circle cx="7" cy="6" r="2.2" fill="none" stroke="#7a8498" stroke-width="1.4"/><circle cx="7" cy="17" r="2.2" fill="none" stroke="#7a8498" stroke-width="1.4"/><circle cx="7" cy="28" r="2.2" fill="none" stroke="#7a8498" stroke-width="1.4"/><path d="M13 6l2-1.5 2 1.5 2-1.5 2 1.5 2-1.5M13 17l2-1.5 2 1.5 2-1.5 2 1.5 2-1.5M13 28l2-1.5 2 1.5 2-1.5 2 1.5 2-1.5" fill="none" stroke="#7a8498" stroke-width="1.1"/></svg><div class="nm"><span class="k">서비스</span> <span class="k">그룹</span> <span class="k">오프라인</span></div><div class="ds">MCCS <span class="k">서비스</span> <span class="k">그룹을</span> <span class="k">오프라인</span> <span class="k">시킵니다.</span></div><svg width="26" height="26" viewBox="0 0 26 26" style="left:1247px;top:15px"><path fill="#bcc3d1" stroke="#8a92a2" stroke-width="1.5" stroke-linejoin="round" fill-rule="evenodd" d="M9.70 5.28L10.70 2.04 L15.30 2.04 L16.30 5.28A8.40 8.40 0 0 1 16.13 5.20L19.12 3.62 L22.38 6.88 L20.80 9.87A8.40 8.40 0 0 1 20.72 9.70L23.96 10.70 L23.96 15.30 L20.72 16.30A8.40 8.40 0 0 1 20.80 16.13L22.38 19.12 L19.12 22.38 L16.13 20.80A8.40 8.40 0 0 1 16.30 20.72L15.30 23.96 L10.70 23.96 L9.70 20.72A8.40 8.40 0 0 1 9.87 20.80L6.88 22.38 L3.62 19.12 L5.20 16.13A8.40 8.40 0 0 1 5.28 16.30L2.04 15.30 L2.04 10.70 L5.28 9.70A8.40 8.40 0 0 1 5.20 9.87L3.62 6.88 L6.88 3.62 L9.87 5.20A8.40 8.40 0 0 1 9.70 5.28 ZM16.90 13.00 A3.90 3.90 0 1 0 9.10 13.00 A3.90 3.90 0 1 0 16.90 13.00 Z"/></svg><div class="vr">v.1</div><div class="cp"><svg width="24" height="24" viewBox="0 0 24 24" style="left:26px;top:7px" fill="none" stroke="#8e8e8e" stroke-width="1.4"><rect x="4.5" y="1.5" width="15.5" height="15.5"/><rect x="1.5" y="4.5" width="15.5" height="15.5" fill="#fff"/><path d="M9.25 8.5v7.5M5.5 12.25h7.5"/></svg></div><div class="cp2"></div></div><div class="row" style="top:911px;background:#fff"><div class="cb"></div><svg width="28" height="34" viewBox="0 0 28 34" style="left:162px;top:10px"><rect x="1" y="1" width="26" height="32" fill="#fff" stroke="#8d9ab0" stroke-width="1.8"/><rect x="3" y="12" width="22" height="10" fill="#cddbf3"/><path d="M1 11.5h26M1 22.5h26" stroke="#8d9ab0" stroke-width="1.6"/><circle cx="7" cy="6" r="2.2" fill="none" stroke="#7a8498" stroke-width="1.4"/><circle cx="7" cy="17" r="2.2" fill="none" stroke="#7a8498" stroke-width="1.4"/><circle cx="7" cy="28" r="2.2" fill="none" stroke="#7a8498" stroke-width="1.4"/><path d="M13 6l2-1.5 2 1.5 2-1.5 2 1.5 2-1.5M13 17l2-1.5 2 1.5 2-1.5 2 1.5 2-1.5M13 28l2-1.5 2 1.5 2-1.5 2 1.5 2-1.5" fill="none" stroke="#7a8498" stroke-width="1.1"/></svg><div class="nm"><span class="k">서비스</span> <span class="k">그룹</span> <span class="k">잠금</span></div><div class="ds">MCCS <span class="k">서비스</span> <span class="k">그룹을</span> <span class="k">잠금으로</span> <span class="k">설정합니다.</span></div><svg width="26" height="26" viewBox="0 0 26 26" style="left:1247px;top:15px"><path fill="#bcc3d1" stroke="#8a92a2" stroke-width="1.5" stroke-linejoin="round" fill-rule="evenodd" d="M9.70 5.28L10.70 2.04 L15.30 2.04 L16.30 5.28A8.40 8.40 0 0 1 16.13 5.20L19.12 3.62 L22.38 6.88 L20.80 9.87A8.40 8.40 0 0 1 20.72 9.70L23.96 10.70 L23.96 15.30 L20.72 16.30A8.40 8.40 0 0 1 20.80 16.13L22.38 19.12 L19.12 22.38 L16.13 20.80A8.40 8.40 0 0 1 16.30 20.72L15.30 23.96 L10.70 23.96 L9.70 20.72A8.40 8.40 0 0 1 9.87 20.80L6.88 22.38 L3.62 19.12 L5.20 16.13A8.40 8.40 0 0 1 5.28 16.30L2.04 15.30 L2.04 10.70 L5.28 9.70A8.40 8.40 0 0 1 5.20 9.87L3.62 6.88 L6.88 3.62 L9.87 5.20A8.40 8.40 0 0 1 9.70 5.28 ZM16.90 13.00 A3.90 3.90 0 1 0 9.10 13.00 A3.90 3.90 0 1 0 16.90 13.00 Z"/></svg><div class="vr">v.1</div><div class="cp"><svg width="24" height="24" viewBox="0 0 24 24" style="left:26px;top:7px" fill="none" stroke="#8e8e8e" stroke-width="1.4"><rect x="4.5" y="1.5" width="15.5" height="15.5"/><rect x="1.5" y="4.5" width="15.5" height="15.5" fill="#fff"/><path d="M9.25 8.5v7.5M5.5 12.25h7.5"/></svg></div><div class="cp2"></div></div><div class="row" style="top:966px;background:#fff"><div class="cb"></div><svg width="28" height="34" viewBox="0 0 28 34" style="left:162px;top:10px"><rect x="1" y="1" width="26" height="32" fill="#fff" stroke="#8d9ab0" stroke-width="1.8"/><rect x="3" y="12" width="22" height="10" fill="#cddbf3"/><path d="M1 11.5h26M1 22.5h26" stroke="#8d9ab0" stroke-width="1.6"/><circle cx="7" cy="6" r="2.2" fill="none" stroke="#7a8498" stroke-width="1.4"/><circle cx="7" cy="17" r="2.2" fill="none" stroke="#7a8498" stroke-width="1.4"/><circle cx="7" cy="28" r="2.2" fill="none" stroke="#7a8498" stroke-width="1.4"/><path d="M13 6l2-1.5 2 1.5 2-1.5 2 1.5 2-1.5M13 17l2-1.5 2 1.5 2-1.5 2 1.5 2-1.5M13 28l2-1.5 2 1.5 2-1.5 2 1.5 2-1.5" fill="none" stroke="#7a8498" stroke-width="1.1"/></svg><div class="nm"><span class="k">서비스</span> <span class="k">그룹</span> <span class="k">임시</span> <span class="k">잠금</span></div><div class="ds">MCCS <span class="k">서비스</span> <span class="k">그룹을</span> <span class="k">임시</span> <span class="k">잠금으로</span> <span class="k">설정합니다.</span></div><svg width="26" height="26" viewBox="0 0 26 26" style="left:1247px;top:15px"><path fill="#bcc3d1" stroke="#8a92a2" stroke-width="1.5" stroke-linejoin="round" fill-rule="evenodd" d="M9.70 5.28L10.70 2.04 L15.30 2.04 L16.30 5.28A8.40 8.40 0 0 1 16.13 5.20L19.12 3.62 L22.38 6.88 L20.80 9.87A8.40 8.40 0 0 1 20.72 9.70L23.96 10.70 L23.96 15.30 L20.72 16.30A8.40 8.40 0 0 1 20.80 16.13L22.38 19.12 L19.12 22.38 L16.13 20.80A8.40 8.40 0 0 1 16.30 20.72L15.30 23.96 L10.70 23.96 L9.70 20.72A8.40 8.40 0 0 1 9.87 20.80L6.88 22.38 L3.62 19.12 L5.20 16.13A8.40 8.40 0 0 1 5.28 16.30L2.04 15.30 L2.04 10.70 L5.28 9.70A8.40 8.40 0 0 1 5.20 9.87L3.62 6.88 L6.88 3.62 L9.87 5.20A8.40 8.40 0 0 1 9.70 5.28 ZM16.90 13.00 A3.90 3.90 0 1 0 9.10 13.00 A3.90 3.90 0 1 0 16.90 13.00 Z"/></svg><div class="vr">v.1</div><div class="cp"><svg width="24" height="24" viewBox="0 0 24 24" style="left:26px;top:7px" fill="none" stroke="#8e8e8e" stroke-width="1.4"><rect x="4.5" y="1.5" width="15.5" height="15.5"/><rect x="1.5" y="4.5" width="15.5" height="15.5" fill="#fff"/><path d="M9.25 8.5v7.5M5.5 12.25h7.5"/></svg></div><div class="cp2"></div></div><div class="row" style="top:1021px;background:#fff"><div class="cb"></div><svg width="28" height="34" viewBox="0 0 28 34" style="left:162px;top:10px"><rect x="1" y="1" width="26" height="32" fill="#fff" stroke="#8d9ab0" stroke-width="1.8"/><rect x="3" y="12" width="22" height="10" fill="#cddbf3"/><path d="M1 11.5h26M1 22.5h26" stroke="#8d9ab0" stroke-width="1.6"/><circle cx="7" cy="6" r="2.2" fill="none" stroke="#7a8498" stroke-width="1.4"/><circle cx="7" cy="17" r="2.2" fill="none" stroke="#7a8498" stroke-width="1.4"/><circle cx="7" cy="28" r="2.2" fill="none" stroke="#7a8498" stroke-width="1.4"/><path d="M13 6l2-1.5 2 1.5 2-1.5 2 1.5 2-1.5M13 17l2-1.5 2 1.5 2-1.5 2 1.5 2-1.5M13 28l2-1.5 2 1.5 2-1.5 2 1.5 2-1.5" fill="none" stroke="#7a8498" stroke-width="1.1"/></svg><div class="nm"><span class="k">서비스</span> <span class="k">그룹</span> <span class="k">수동</span> <span class="k">페일오버</span></div><div class="ds">MCCS <span class="k">서비스</span> <span class="k">그룹을</span> <span class="k">수동</span> <span class="k">페일오버합니다.</span></div><svg width="26" height="26" viewBox="0 0 26 26" style="left:1247px;top:15px"><path fill="#bcc3d1" stroke="#8a92a2" stroke-width="1.5" stroke-linejoin="round" fill-rule="evenodd" d="M9.70 5.28L10.70 2.04 L15.30 2.04 L16.30 5.28A8.40 8.40 0 0 1 16.13 5.20L19.12 3.62 L22.38 6.88 L20.80 9.87A8.40 8.40 0 0 1 20.72 9.70L23.96 10.70 L23.96 15.30 L20.72 16.30A8.40 8.40 0 0 1 20.80 16.13L22.38 19.12 L19.12 22.38 L16.13 20.80A8.40 8.40 0 0 1 16.30 20.72L15.30 23.96 L10.70 23.96 L9.70 20.72A8.40 8.40 0 0 1 9.87 20.80L6.88 22.38 L3.62 19.12 L5.20 16.13A8.40 8.40 0 0 1 5.28 16.30L2.04 15.30 L2.04 10.70 L5.28 9.70A8.40 8.40 0 0 1 5.20 9.87L3.62 6.88 L6.88 3.62 L9.87 5.20A8.40 8.40 0 0 1 9.70 5.28 ZM16.90 13.00 A3.90 3.90 0 1 0 9.10 13.00 A3.90 3.90 0 1 0 16.90 13.00 Z"/></svg><div class="vr">v.1</div><div class="cp"><svg width="24" height="24" viewBox="0 0 24 24" style="left:26px;top:7px" fill="none" stroke="#8e8e8e" stroke-width="1.4"><rect x="4.5" y="1.5" width="15.5" height="15.5"/><rect x="1.5" y="4.5" width="15.5" height="15.5" fill="#fff"/><path d="M9.25 8.5v7.5M5.5 12.25h7.5"/></svg></div><div class="cp2"></div></div><div class="row" style="top:1076px;background:#fff"><div class="cb"></div><svg width="28" height="34" viewBox="0 0 28 34" style="left:162px;top:10px"><rect x="1" y="1" width="26" height="32" fill="#fff" stroke="#8d9ab0" stroke-width="1.8"/><rect x="3" y="12" width="22" height="10" fill="#cddbf3"/><path d="M1 11.5h26M1 22.5h26" stroke="#8d9ab0" stroke-width="1.6"/><circle cx="7" cy="6" r="2.2" fill="none" stroke="#7a8498" stroke-width="1.4"/><circle cx="7" cy="17" r="2.2" fill="none" stroke="#7a8498" stroke-width="1.4"/><circle cx="7" cy="28" r="2.2" fill="none" stroke="#7a8498" stroke-width="1.4"/><path d="M13 6l2-1.5 2 1.5 2-1.5 2 1.5 2-1.5M13 17l2-1.5 2 1.5 2-1.5 2 1.5 2-1.5M13 28l2-1.5 2 1.5 2-1.5 2 1.5 2-1.5" fill="none" stroke="#7a8498" stroke-width="1.1"/></svg><div class="nm"><span class="k">서비스</span> <span class="k">그룹</span> <span class="k">잠금</span> <span class="k">해제</span></div><div class="ds">MCCS <span class="k">서비스</span> <span class="k">그룹</span> <span class="k">잠금을</span> <span class="k">해제합니다.</span></div><svg width="26" height="26" viewBox="0 0 26 26" style="left:1247px;top:15px"><path fill="#bcc3d1" stroke="#8a92a2" stroke-width="1.5" stroke-linejoin="round" fill-rule="evenodd" d="M9.70 5.28L10.70 2.04 L15.30 2.04 L16.30 5.28A8.40 8.40 0 0 1 16.13 5.20L19.12 3.62 L22.38 6.88 L20.80 9.87A8.40 8.40 0 0 1 20.72 9.70L23.96 10.70 L23.96 15.30 L20.72 16.30A8.40 8.40 0 0 1 20.80 16.13L22.38 19.12 L19.12 22.38 L16.13 20.80A8.40 8.40 0 0 1 16.30 20.72L15.30 23.96 L10.70 23.96 L9.70 20.72A8.40 8.40 0 0 1 9.87 20.80L6.88 22.38 L3.62 19.12 L5.20 16.13A8.40 8.40 0 0 1 5.28 16.30L2.04 15.30 L2.04 10.70 L5.28 9.70A8.40 8.40 0 0 1 5.20 9.87L3.62 6.88 L6.88 3.62 L9.87 5.20A8.40 8.40 0 0 1 9.70 5.28 ZM16.90 13.00 A3.90 3.90 0 1 0 9.10 13.00 A3.90 3.90 0 1 0 16.90 13.00 Z"/></svg><div class="vr">v.1</div><div class="cp"><svg width="24" height="24" viewBox="0 0 24 24" style="left:26px;top:7px" fill="none" stroke="#8e8e8e" stroke-width="1.4"><rect x="4.5" y="1.5" width="15.5" height="15.5"/><rect x="1.5" y="4.5" width="15.5" height="15.5" fill="#fff"/><path d="M9.25 8.5v7.5M5.5 12.25h7.5"/></svg></div><div class="cp2"></div></div><div class="row" style="top:1131px;background:#fff"><div class="cb"></div><svg width="34" height="34" viewBox="0 0 34 34" style="left:160px;top:10px"><circle cx="17" cy="17" r="15.5" fill="#4a8de6" stroke="#5c6b80" stroke-width="1.2" stroke-opacity=".6"/><path d="M11.5 12a8 8 0 1 0 11 0" fill="none" stroke="#fff" stroke-width="2.6"/><path d="M17 8v9" stroke="#fff" stroke-width="2.6"/></svg><div class="nm">VM <span class="k">전원</span> <span class="k">끄기</span></div><div class="ds">VM <span class="k">전원</span> <span class="k">끄기를</span> <span class="k">실행합니다.</span></div><svg width="26" height="26" viewBox="0 0 26 26" style="left:1247px;top:15px"><path fill="#bcc3d1" stroke="#8a92a2" stroke-width="1.5" stroke-linejoin="round" fill-rule="evenodd" d="M9.70 5.28L10.70 2.04 L15.30 2.04 L16.30 5.28A8.40 8.40 0 0 1 16.13 5.20L19.12 3.62 L22.38 6.88 L20.80 9.87A8.40 8.40 0 0 1 20.72 9.70L23.96 10.70 L23.96 15.30 L20.72 16.30A8.40 8.40 0 0 1 20.80 16.13L22.38 19.12 L19.12 22.38 L16.13 20.80A8.40 8.40 0 0 1 16.30 20.72L15.30 23.96 L10.70 23.96 L9.70 20.72A8.40 8.40 0 0 1 9.87 20.80L6.88 22.38 L3.62 19.12 L5.20 16.13A8.40 8.40 0 0 1 5.28 16.30L2.04 15.30 L2.04 10.70 L5.28 9.70A8.40 8.40 0 0 1 5.20 9.87L3.62 6.88 L6.88 3.62 L9.87 5.20A8.40 8.40 0 0 1 9.70 5.28 ZM16.90 13.00 A3.90 3.90 0 1 0 9.10 13.00 A3.90 3.90 0 1 0 16.90 13.00 Z"/></svg><div class="vr">v.1</div><div class="cp"><svg width="24" height="24" viewBox="0 0 24 24" style="left:26px;top:7px" fill="none" stroke="#8e8e8e" stroke-width="1.4"><rect x="4.5" y="1.5" width="15.5" height="15.5"/><rect x="1.5" y="4.5" width="15.5" height="15.5" fill="#fff"/><path d="M9.25 8.5v7.5M5.5 12.25h7.5"/></svg></div><div class="cp2"></div></div><div class="row" style="top:1186px;background:#fff"><div class="cb"></div><svg width="34" height="34" viewBox="0 0 34 34" style="left:160px;top:10px"><circle cx="17" cy="17" r="15.5" fill="#4a8de6" stroke="#5c6b80" stroke-width="1.2" stroke-opacity=".6"/><path d="M11.5 12a8 8 0 1 0 11 0" fill="none" stroke="#fff" stroke-width="2.6"/><path d="M17 8v9" stroke="#fff" stroke-width="2.6"/></svg><div class="nm"><span class="k">게스트</span> OS <span class="k">재시작</span></div><div class="ds"><span class="k">게스트</span> OS<span class="k">를</span> <span class="k">재시작합니다.</span></div><svg width="26" height="26" viewBox="0 0 26 26" style="left:1247px;top:15px"><path fill="#bcc3d1" stroke="#8a92a2" stroke-width="1.5" stroke-linejoin="round" fill-rule="evenodd" d="M9.70 5.28L10.70 2.04 L15.30 2.04 L16.30 5.28A8.40 8.40 0 0 1 16.13 5.20L19.12 3.62 L22.38 6.88 L20.80 9.87A8.40 8.40 0 0 1 20.72 9.70L23.96 10.70 L23.96 15.30 L20.72 16.30A8.40 8.40 0 0 1 20.80 16.13L22.38 19.12 L19.12 22.38 L16.13 20.80A8.40 8.40 0 0 1 16.30 20.72L15.30 23.96 L10.70 23.96 L9.70 20.72A8.40 8.40 0 0 1 9.87 20.80L6.88 22.38 L3.62 19.12 L5.20 16.13A8.40 8.40 0 0 1 5.28 16.30L2.04 15.30 L2.04 10.70 L5.28 9.70A8.40 8.40 0 0 1 5.20 9.87L3.62 6.88 L6.88 3.62 L9.87 5.20A8.40 8.40 0 0 1 9.70 5.28 ZM16.90 13.00 A3.90 3.90 0 1 0 9.10 13.00 A3.90 3.90 0 1 0 16.90 13.00 Z"/></svg><div class="vr">v.1</div><div class="cp"><svg width="24" height="24" viewBox="0 0 24 24" style="left:26px;top:7px" fill="none" stroke="#8e8e8e" stroke-width="1.4"><rect x="4.5" y="1.5" width="15.5" height="15.5"/><rect x="1.5" y="4.5" width="15.5" height="15.5" fill="#fff"/><path d="M9.25 8.5v7.5M5.5 12.25h7.5"/></svg></div><div class="cp2"></div></div><div class="a" style="left:2455px;top:364px;width:23px;height:903px;background:#fafafa"></div><div class="a" style="left:949px;top:1241px;width:1529px;height:26px;background:#fafafa"></div><svg width="16" height="11" viewBox="0 0 16 11" style="left:2459px;top:371px"><path d="M8 2l5.8 7.5H2.2z" fill="#8a8a8a" stroke="#8a8a8a" stroke-linejoin="round" stroke-width="2.6"/></svg><svg width="16" height="11" viewBox="0 0 16 11" style="left:2459px;top:1228px"><path d="M8 9l5.8-7.5H2.2z" fill="#8a8a8a" stroke="#8a8a8a" stroke-linejoin="round" stroke-width="2.6"/></svg><div class="a" style="left:2460px;top:391px;width:13px;height:79px;border-radius:7px;background:#8a8a8a"></div><svg width="11" height="16" viewBox="0 0 11 16" style="left:955px;top:1248px"><path d="M2 8l7.5-5.8v11.6z" fill="#8a8a8a" stroke="#8a8a8a" stroke-linejoin="round" stroke-width="2.6"/></svg><svg width="11" height="16" viewBox="0 0 11 16" style="left:2438px;top:1248px"><path d="M9 8L1.5 2.2v11.6z" fill="#8a8a8a" stroke="#8a8a8a" stroke-linejoin="round" stroke-width="2.6"/></svg><div class="a" style="left:976px;top:1249px;width:1377px;height:13px;border-radius:7px;background:#8a8a8a"></div></body></html>
